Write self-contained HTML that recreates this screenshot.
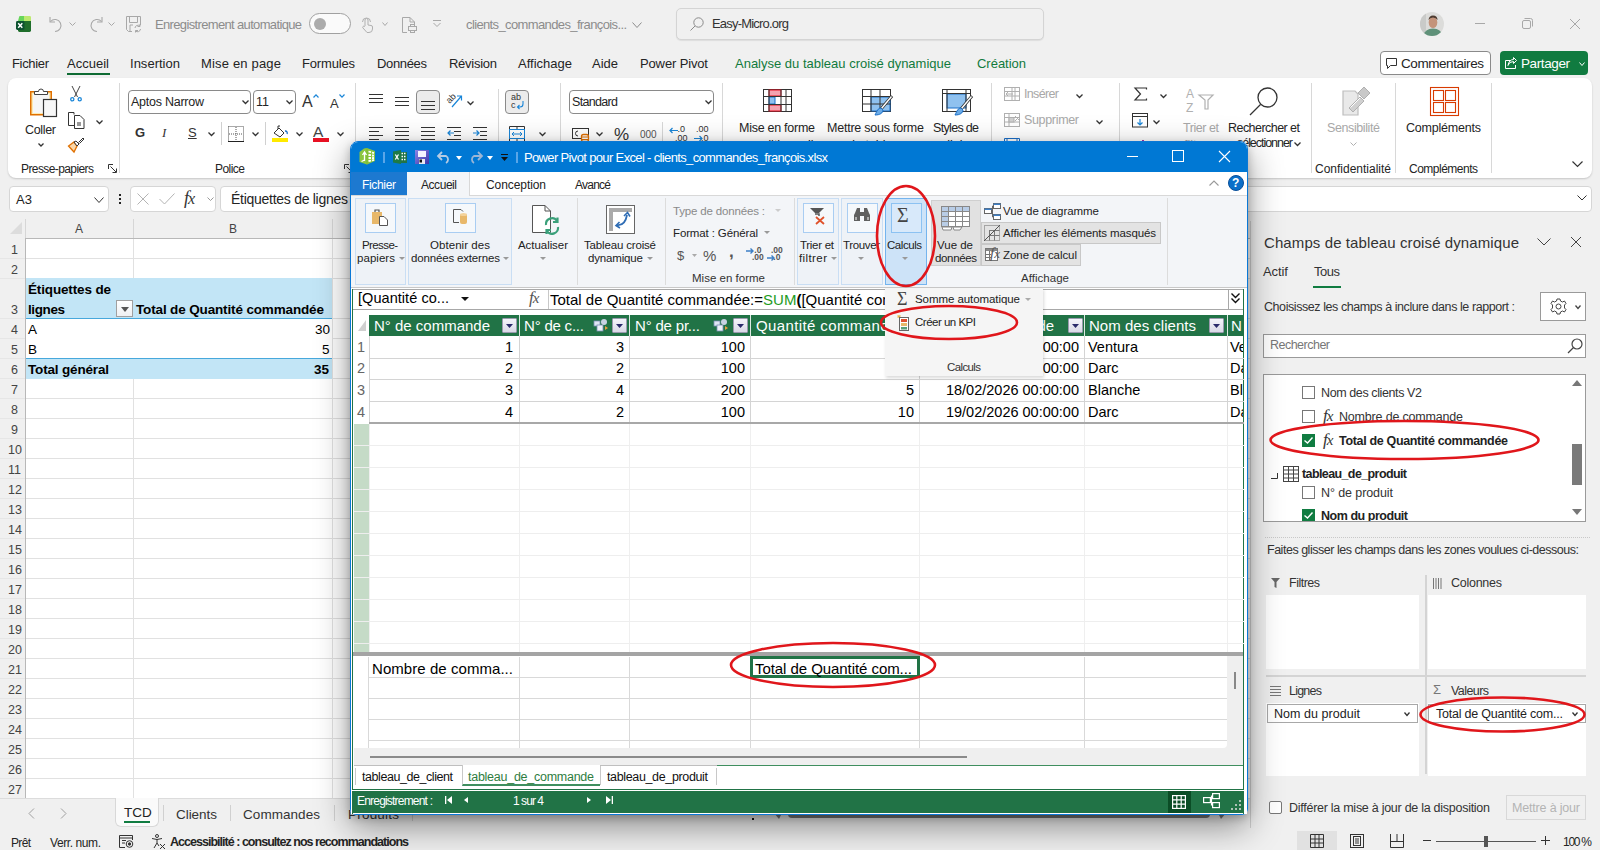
<!DOCTYPE html>
<html><head><meta charset="utf-8">
<style>
*{margin:0;padding:0;box-sizing:border-box}
html,body{width:1600px;height:850px;overflow:hidden;background:#f0f0f0;font-family:"Liberation Sans",sans-serif;color:#242424}
.a{position:absolute}
.t{position:absolute;white-space:nowrap;line-height:1}
svg{position:absolute;overflow:visible}
</style></head><body>

<!-- ===== EXCEL TITLE BAR ===== -->
<div id="titlebar">
<svg style="left:16px;top:16px" width="16" height="16" viewBox="0 0 16 16"><path d="M3 1.2 Q3 0 4.2 0 H8 V5 H2 Z" fill="#67d55b"/><path d="M8 0 H13.8 Q15 0 15 1.2 V5 H8 Z" fill="#bde96f"/><path d="M2 5 H15 V14.6 Q15 16 13.6 16 H3.4 Q2 16 2 14.6 Z" fill="#1f6e2b"/><rect x="0" y="5" width="8.5" height="9" rx="1.4" fill="#0c5230"/><path d="M2.2 7.3 L6.3 11.8 M6.3 7.3 L2.2 11.8" stroke="#fff" stroke-width="1.5"/></svg>
<svg style="left:49px;top:16px" width="16" height="16" viewBox="0 0 16 16" fill="none" stroke="#a8a8a8" stroke-width="1.1">
 <path d="M1 1 V6 H6"/><path d="M1.5 5.5 A6 6 0 1 1 6 15.5"/>
</svg>
<svg style="left:69px;top:22px" width="7" height="4" viewBox="0 0 7 4" fill="none" stroke="#a8a8a8"><path d="M0.5 0.5 L3.5 3.5 L6.5 0.5"/></svg>
<svg style="left:88px;top:16px" width="16" height="16" viewBox="0 0 16 16" fill="none" stroke="#a8a8a8" stroke-width="1.1">
 <path d="M14 1 V6 H9"/><path d="M13.5 5.5 A6 6 0 1 0 9 15.5"/>
</svg>
<svg style="left:108px;top:22px" width="7" height="4" viewBox="0 0 7 4" fill="none" stroke="#a8a8a8"><path d="M0.5 0.5 L3.5 3.5 L6.5 0.5"/></svg>
<svg style="left:126px;top:16px" width="16" height="16" viewBox="0 0 16 16" fill="none" stroke="#a8a8a8" stroke-width="1">
 <path d="M0.5 0.5 H14.5 V9 M0.5 0.5 V13.5 L2.5 15.5 H6"/><path d="M3.5 0.5 V6.5 H11.5 V0.5"/><path d="M7 9 H4 V15"/>
 <path d="M9 12 A3 3 0 0 1 14 10 M14 8 V10.5 H11.5 M14.5 13 A3 3 0 0 1 9.5 15 M9.5 16.5 V14.5 H12"/>
</svg>
<div class="t" style="left:155px;top:18px;font-size:13px;color:#8c8c8c;letter-spacing:-0.652px">Enregistrement automatique</div>
<div class="a" style="left:309px;top:13px;width:42px;height:21px;border:1px solid #a0a0a0;border-radius:11px;background:#fafafa"></div>
<div class="a" style="left:314px;top:18px;width:12px;height:12px;border-radius:6px;background:#ababab"></div>
<svg style="left:361px;top:17px" width="12" height="16" viewBox="0 0 12 16" fill="none" stroke="#b0b0b0"><path d="M4 9 V3 A1.5 1.5 0 0 1 7 3 V8 L10 8.5 A1.5 1.5 0 0 1 11.5 10 V12 A3.5 3.5 0 0 1 8 15.5 H6 L2 11 A1 1 0 0 1 3.5 9.5 Z"/><path d="M1.5 5 A4 4 0 0 1 9.5 5"/></svg><svg style="left:382px;top:22px" width="6" height="4" viewBox="0 0 6 4" fill="none" stroke="#a8a8a8"><path d="M0.5 0.5 L3.0 3.5 L5.5 0.5"/></svg><svg style="left:402px;top:17px" width="15" height="16" viewBox="0 0 15 16" fill="none" stroke="#a8a8a8"><path d="M8 0.5 H0.5 V15.5 H5 M8 0.5 L12.5 5 V8 M8 0.5 V5 H12.5"/><rect x="6.5" y="9.5" width="8" height="4"/><rect x="8.5" y="7.5" width="4" height="2"/><rect x="8.5" y="13.5" width="4" height="2"/></svg><svg style="left:433px;top:20px" width="8" height="7" viewBox="0 0 8 7" fill="none" stroke="#a8a8a8"><path d="M0 0.5 H8 M0.5 3 L4 6.5 L7.5 3"/></svg><div class="t" style="left:466px;top:18px;font-size:13px;color:#8c8c8c;letter-spacing:-0.624px">clients_commandes_françois...</div><svg style="left:632px;top:22px" width="10" height="6" viewBox="0 0 10 6" fill="none" stroke="#8c8c8c"><path d="M0.5 0.5 L5.0 5.5 L9.5 0.5"/></svg><div class="a" style="left:676px;top:8px;width:368px;height:32px;background:#f0f0f0;border:1px solid #d4d4d4;border-radius:5px;box-shadow:0 1px 1px rgba(0,0,0,0.08)"></div><svg style="left:690px;top:17px" width="14" height="14" viewBox="0 0 14 14" fill="none" stroke="#8a8a8a"><circle cx="8.5" cy="5.5" r="4.7"/><path d="M5 9 L0.5 13.5"/></svg><div class="t" style="left:712px;top:17px;font-size:13px;color:#333;letter-spacing:-0.802px">Easy-Micro.org</div><svg style="left:1420px;top:12px" width="24" height="24" viewBox="0 0 24 24"><defs><clipPath id="av"><circle cx="12" cy="12" r="12"/></clipPath></defs><g clip-path="url(#av)"><rect width="24" height="24" fill="#dcdcda"/><rect x="0" y="0" width="6" height="24" fill="#c9cac8"/><ellipse cx="13" cy="10.5" rx="4.3" ry="5.5" fill="#c4937a"/><path d="M8.5 8 Q9 3.5 13 3.5 Q17.5 3.5 17.5 8 Q16 5.5 13 5.5 Q10 5.5 8.5 8 Z" fill="#4e3b30"/><path d="M3 24 Q5 16.5 13 16.5 Q21 16.5 23 24 Z" fill="#5f9179"/></g></svg><div class="a" style="left:1475px;top:23px;width:10px;height:1px;background:#a8a8a8"></div><svg style="left:1522px;top:18px" width="11" height="11" viewBox="0 0 11 11" fill="none" stroke="#a8a8a8"><rect x="0.5" y="2.5" width="8" height="8" rx="1.5"/><path d="M2.5 0.5 H8.5 A2 2 0 0 1 10.5 2.5 V8.5"/></svg><svg style="left:1570px;top:19px" width="10" height="10" viewBox="0 0 10 10" fill="none" stroke="#a8a8a8"><path d="M0 0 L10 10 M10 0 L0 10"/></svg>
</div>

<!-- ===== TABS ===== -->
<div id="tabs" style="font-size:13px">
<div class="t" style="left:12px;top:57px;letter-spacing:-0.336px">Fichier</div>
<div class="t" style="left:67px;top:57px;letter-spacing:0.013px">Accueil</div>
<div class="a" style="left:67px;top:73px;width:43px;height:2px;background:#0e6b33"></div>
<div class="t" style="left:130px;top:57px;letter-spacing:0.016px">Insertion</div>
<div class="t" style="left:201px;top:57px;letter-spacing:0.176px">Mise en page</div>
<div class="t" style="left:302px;top:57px;letter-spacing:-0.170px">Formules</div>
<div class="t" style="left:377px;top:57px;letter-spacing:-0.341px">Données</div>
<div class="t" style="left:449px;top:57px;letter-spacing:-0.266px">Révision</div>
<div class="t" style="left:518px;top:57px;letter-spacing:0.004px">Affichage</div>
<div class="t" style="left:592px;top:57px;letter-spacing:-0.010px">Aide</div>
<div class="t" style="left:640px;top:57px;letter-spacing:-0.138px">Power Pivot</div>
<div class="t" style="left:735px;top:57px;color:#117a3c;letter-spacing:-0.003px">Analyse du tableau croisé dynamique</div>
<div class="t" style="left:977px;top:57px;color:#117a3c;letter-spacing:-0.020px">Création</div>
<div class="a" style="left:1380px;top:51px;width:111px;height:24px;background:#fff;border:1px solid #8a8a8a;border-radius:4px"></div><svg style="left:1386px;top:58px" width="11" height="11" viewBox="0 0 11 11" fill="none" stroke="#333"><path d="M0.5 0.5 H10.5 V7.5 H4.5 L1.5 10.5 V7.5 H0.5 Z"/></svg><div class="t" style="left:1401px;top:57px;font-size:13.5px;letter-spacing:-0.435px">Commentaires</div><div class="a" style="left:1500px;top:51px;width:88px;height:24px;background:#107b40;border-radius:4px"></div><svg style="left:1505px;top:57px" width="12" height="12" viewBox="0 0 12 12" fill="none" stroke="#fff"><path d="M5 3.5 H0.5 V11.5 H10.5 V8"/><path d="M3 8.5 Q4 4.5 8.5 4.5 V6.5 L11.5 3.5 L8.5 0.5 V2.5 Q4 2.5 3 8.5"/></svg><div class="t" style="left:1521px;top:57px;font-size:13.5px;color:#fff;letter-spacing:-0.397px">Partager</div><svg style="left:1579px;top:62px" width="6" height="4" viewBox="0 0 6 4" fill="none" stroke="#fff"><path d="M0.5 0.5 L3.0 3.5 L5.5 0.5"/></svg>
</div>

<!-- ===== RIBBON ===== -->
<div class="a" style="left:8px;top:78px;width:1584px;height:100px;background:#fff;border-radius:8px;box-shadow:0 1px 2px rgba(0,0,0,0.18)"></div>
<div id="xlrib" style="font-size:12px">
<!-- Presse-papiers -->
<svg style="left:30px;top:87px" width="28" height="31" viewBox="0 0 28 31" fill="none">
 <rect x="0.75" y="4.75" width="20.5" height="23" fill="#fde9b0" stroke="#e07000" stroke-width="1.5"/>
 <rect x="3" y="7" width="16" height="19" fill="#f6f6f6"/>
 <path d="M4.5 7.5 V4.5 H8.5 A2.5 2.5 0 0 1 13.5 4.5 H17.5 V7.5 Z" fill="#fff" stroke="#444" stroke-width="1"/>
 <rect x="13.5" y="12.5" width="13" height="17" fill="#f7f7f7" stroke="#333" stroke-width="1.2"/>
</svg>
<div class="t" style="left:25px;top:124px;font-size:12.5px;letter-spacing:-0.331px">Coller</div>
<svg style="left:38px;top:143px" width="6" height="4" viewBox="0 0 6 4" fill="none" stroke="#333" stroke-width="1.3"><path d="M0.5 0.5 L3 3 L5.5 0.5"/></svg>
<svg style="left:70px;top:86px" width="12" height="16" viewBox="0 0 12 16" fill="none" stroke="#444">
 <path d="M2 0 L7.5 11 M10 0 L4.5 11"/><circle cx="2.3" cy="13.3" r="1.6" stroke="#1a86d8" stroke-width="1.3"/><circle cx="9.7" cy="13.3" r="1.6" stroke="#1a86d8" stroke-width="1.3"/>
</svg>
<svg style="left:68px;top:112px" width="17" height="17" viewBox="0 0 17 17" fill="none" stroke="#333">
 <path d="M6 2.5 V0.5 H0.5 V13.5 H6"/><path d="M6.5 3.5 H12 L16 7.5 V16.5 H6.5 Z"/><path d="M9 11 H13 M9 13 H13"/>
</svg>
<svg style="left:96px;top:120px" width="7" height="4" viewBox="0 0 7 4" fill="none" stroke="#333" stroke-width="1.3"><path d="M0.5 0.5 L3.5 3.5 L6.5 0.5"/></svg>
<svg style="left:68px;top:137px" width="17" height="17" viewBox="0 0 17 17" fill="none">
 <path d="M0.5 9 L6 15 L9 9 L6 5 Z" fill="#fbd7a8" stroke="#e07000" stroke-width="1.3"/>
 <path d="M6 5 L9 9 L11 7 L8 4 Z" fill="#fff" stroke="#333"/>
 <path d="M10.5 5.5 L15 1 L16 2 L11.5 6.5" stroke="#333"/>
</svg>
<div class="t" style="left:21px;top:163px;font-size:12px;letter-spacing:-0.593px">Presse-papiers</div>
<svg style="left:108px;top:164px" width="9" height="9" viewBox="0 0 9 9" fill="none" stroke="#333"><path d="M0.5 5 V0.5 H5"/><path d="M2.5 2.5 L8 8 M4.5 8.5 H8.5 V4.5"/></svg>
<div class="a" style="left:119px;top:83px;width:1px;height:90px;background:#d8d8d8"></div>

<!-- Police -->
<div class="a" style="left:128px;top:90px;width:123px;height:24px;background:#fff;border:1px solid #8a8a8a;border-radius:4px"></div>
<div class="t" style="left:131px;top:96px;font-size:12.5px;letter-spacing:-0.249px">Aptos Narrow</div>
<svg style="left:242px;top:100px" width="7" height="4" viewBox="0 0 7 4" fill="none" stroke="#333" stroke-width="1.3"><path d="M0.5 0.5 L3.5 3.5 L6.5 0.5"/></svg>
<div class="a" style="left:253px;top:90px;width:43px;height:24px;background:#fff;border:1px solid #8a8a8a;border-radius:4px"></div>
<div class="t" style="left:256px;top:96px;font-size:12.5px">11</div>
<svg style="left:286px;top:100px" width="7" height="4" viewBox="0 0 7 4" fill="none" stroke="#333" stroke-width="1.3"><path d="M0.5 0.5 L3.5 3.5 L6.5 0.5"/></svg>
<div class="t" style="left:302px;top:94px;font-size:16px;color:#333">A</div>
<svg style="left:313px;top:94px" width="6" height="4" viewBox="0 0 6 4" fill="none" stroke="#1a86d8" stroke-width="1.2"><path d="M0.5 3.5 L3 0.8 L5.5 3.5"/></svg>
<div class="t" style="left:330px;top:97px;font-size:13px;color:#333">A</div>
<svg style="left:339px;top:94px" width="6" height="4" viewBox="0 0 6 4" fill="none" stroke="#1a86d8" stroke-width="1.2"><path d="M0.5 0.5 L3 3.2 L5.5 0.5"/></svg>
<div class="t" style="left:135px;top:126px;font-size:13px;font-weight:bold;color:#333">G</div>
<div class="t" style="left:162px;top:126px;font-size:13px;font-style:italic;font-family:'Liberation Serif';color:#333">I</div>
<div class="t" style="left:188px;top:126px;font-size:13px;color:#333;text-decoration:underline">S</div>
<svg style="left:208px;top:132px" width="7" height="4" viewBox="0 0 7 4" fill="none" stroke="#333" stroke-width="1.3"><path d="M0.5 0.5 L3.5 3.5 L6.5 0.5"/></svg>
<div class="a" style="left:221px;top:122px;width:1px;height:23px;background:#d0d0d0"></div>
<svg style="left:228px;top:126px" width="16" height="16" viewBox="0 0 16 16" fill="none" stroke="#555" stroke-dasharray="1 1"><path d="M0.5 0.5 H15.5 V15 M0.5 0.5 V15 M8 1 V15 M1 8 H15"/><path d="M0 15.5 H16" stroke="#222" stroke-dasharray="none"/></svg>
<svg style="left:252px;top:132px" width="7" height="4" viewBox="0 0 7 4" fill="none" stroke="#333" stroke-width="1.3"><path d="M0.5 0.5 L3.5 3.5 L6.5 0.5"/></svg>
<div class="a" style="left:265px;top:122px;width:1px;height:23px;background:#d0d0d0"></div>
<svg style="left:272px;top:125px" width="17" height="18" viewBox="0 0 17 18" fill="none">
 <path d="M2 8 L7 3 L12 8 L8 12 Z" stroke="#333"/><path d="M6 4 V1 H8" stroke="#333"/><path d="M13 6 A2 2 0 0 1 15 9" stroke="#1a6fc8" stroke-width="1.3"/>
 <rect x="0" y="13" width="16" height="4" fill="#ffea00"/>
</svg>
<svg style="left:296px;top:132px" width="7" height="4" viewBox="0 0 7 4" fill="none" stroke="#333" stroke-width="1.3"><path d="M0.5 0.5 L3.5 3.5 L6.5 0.5"/></svg>
<div class="t" style="left:313px;top:124px;font-size:15.5px;color:#444">A</div>
<div class="a" style="left:313px;top:138px;width:16px;height:4px;background:#e81123"></div>
<svg style="left:337px;top:132px" width="7" height="4" viewBox="0 0 7 4" fill="none" stroke="#333" stroke-width="1.3"><path d="M0.5 0.5 L3.5 3.5 L6.5 0.5"/></svg>
<div class="t" style="left:215px;top:163px;font-size:12px;letter-spacing:-0.537px">Police</div>
<svg style="left:344px;top:164px" width="9" height="9" viewBox="0 0 9 9" fill="none" stroke="#333"><path d="M0.5 5 V0.5 H5"/><path d="M2.5 2.5 L8 8 M4.5 8.5 H8.5 V4.5"/></svg>
<div class="a" style="left:355px;top:83px;width:1px;height:90px;background:#d8d8d8"></div>
</div>

<div id="xlrib2" style="font-size:12px">
<div class="a" style="left:369px;top:94px;width:14px;height:1px;background:#333"></div><div class="a" style="left:369px;top:98px;width:14px;height:1px;background:#333"></div><div class="a" style="left:369px;top:102px;width:14px;height:1px;background:#333"></div><div class="a" style="left:395px;top:97px;width:14px;height:1px;background:#333"></div><div class="a" style="left:395px;top:101px;width:14px;height:1px;background:#333"></div><div class="a" style="left:395px;top:105px;width:14px;height:1px;background:#333"></div><div class="a" style="left:416px;top:90px;width:24px;height:24px;background:#ececec;border:1px solid #8a8a8a;border-radius:4px"></div><div class="a" style="left:421px;top:101px;width:14px;height:1px;background:#333"></div><div class="a" style="left:421px;top:105px;width:14px;height:1px;background:#333"></div><div class="a" style="left:421px;top:109px;width:14px;height:1px;background:#333"></div><div class="t" style="left:447px;top:93px;font-size:9px;color:#333;transform:rotate(-45deg);transform-origin:6px 6px">ab</div><svg style="left:451px;top:94px" width="12" height="14" viewBox="0 0 12 14" fill="none" stroke="#1a86d8" stroke-width="1.2"><path d="M1 13 L10.5 2 M6 2 H10.5 V6.5"/></svg><svg style="left:467px;top:101px" width="7" height="4" viewBox="0 0 7 4" fill="none" stroke="#333" stroke-width="1.3"><path d="M0.5 0.5 L3.5 3.5 L6.5 0.5"/></svg><div class="a" style="left:369px;top:127px;width:14px;height:1px;background:#333"></div><div class="a" style="left:369px;top:131px;width:14px;height:1px;background:#333"></div><div class="a" style="left:369px;top:135px;width:14px;height:1px;background:#333"></div><div class="a" style="left:369px;top:139px;width:14px;height:1px;background:#333"></div><div class="a" style="left:379px;top:131px;width:4px;height:1px;background:#fff"></div><div class="a" style="left:379px;top:139px;width:4px;height:1px;background:#fff"></div><div class="a" style="left:395px;top:131px;width:2px;height:1px;background:#fff"></div><div class="a" style="left:407px;top:131px;width:2px;height:1px;background:#fff"></div><div class="a" style="left:395px;top:139px;width:2px;height:1px;background:#fff"></div><div class="a" style="left:407px;top:139px;width:2px;height:1px;background:#fff"></div><div class="a" style="left:421px;top:131px;width:4px;height:1px;background:#fff"></div><div class="a" style="left:421px;top:139px;width:4px;height:1px;background:#fff"></div><div class="a" style="left:395px;top:127px;width:14px;height:1px;background:#333"></div><div class="a" style="left:395px;top:131px;width:14px;height:1px;background:#333"></div><div class="a" style="left:395px;top:135px;width:14px;height:1px;background:#333"></div><div class="a" style="left:395px;top:139px;width:14px;height:1px;background:#333"></div><div class="a" style="left:421px;top:127px;width:14px;height:1px;background:#333"></div><div class="a" style="left:421px;top:131px;width:14px;height:1px;background:#333"></div><div class="a" style="left:421px;top:135px;width:14px;height:1px;background:#333"></div><div class="a" style="left:421px;top:139px;width:14px;height:1px;background:#333"></div><div class="a" style="left:447px;top:127px;width:14px;height:1px;background:#333"></div><div class="a" style="left:447px;top:139px;width:14px;height:1px;background:#333"></div><div class="a" style="left:454px;top:131px;width:7px;height:1px;background:#333"></div><div class="a" style="left:454px;top:135px;width:7px;height:1px;background:#333"></div><svg style="left:447px;top:129px" width="7" height="8" viewBox="0 0 7 8" fill="none" stroke="#1a86d8" stroke-width="1.2"><path d="M7 4 H1 M3.5 1.5 L1 4 L3.5 6.5"/></svg><div class="a" style="left:473px;top:127px;width:14px;height:1px;background:#333"></div><div class="a" style="left:473px;top:139px;width:14px;height:1px;background:#333"></div><div class="a" style="left:480px;top:131px;width:7px;height:1px;background:#333"></div><div class="a" style="left:480px;top:135px;width:7px;height:1px;background:#333"></div><svg style="left:473px;top:129px" width="7" height="8" viewBox="0 0 7 8" fill="none" stroke="#1a86d8" stroke-width="1.2"><path d="M0 4 H6 M3.5 1.5 L6 4 L3.5 6.5"/></svg><div class="a" style="left:498px;top:89px;width:1px;height:56px;background:#d8d8d8"></div><div class="a" style="left:505px;top:90px;width:24px;height:24px;background:#ececec;border:1px solid #8a8a8a;border-radius:4px"></div><div class="t" style="left:511px;top:93px;font-size:9px;color:#333;line-height:8px">ab<br>c</div><svg style="left:517px;top:101px" width="8" height="8" viewBox="0 0 8 8" fill="none" stroke="#1a86d8" stroke-width="1.1"><path d="M6 0 V3 A3 3 0 0 1 3 6 H0.5 M2.5 4 L0.5 6 L2.5 8"/></svg><svg style="left:509px;top:126px" width="16" height="16" viewBox="0 0 16 16" fill="none" stroke="#333"><path d="M0.5 0.5 H15.5 V3.5 H0.5 Z M0.5 12.5 H15.5 V15.5 H0.5 Z M8 0 V3.5 M8 12.5 V16"/><rect x="0.5" y="3.5" width="15" height="9" stroke="#1a86d8"/><path d="M3 8 H13 M5 6 L3 8 L5 10 M11 6 L13 8 L11 10" stroke="#1a86d8"/></svg><svg style="left:539px;top:132px" width="7" height="4" viewBox="0 0 7 4" fill="none" stroke="#333" stroke-width="1.3"><path d="M0.5 0.5 L3.5 3.5 L6.5 0.5"/></svg><div class="a" style="left:560px;top:83px;width:1px;height:62px;background:#d8d8d8"></div><div class="a" style="left:569px;top:90px;width:145px;height:24px;background:#fff;border:1px solid #8a8a8a;border-radius:4px"></div><div class="t" style="left:572px;top:96px;font-size:12.5px;letter-spacing:-0.676px">Standard</div><svg style="left:705px;top:100px" width="7" height="4" viewBox="0 0 7 4" fill="none" stroke="#333" stroke-width="1.3"><path d="M0.5 0.5 L3.5 3.5 L6.5 0.5"/></svg><svg style="left:572px;top:128px" width="18" height="14" viewBox="0 0 18 14" fill="none" stroke="#333"><rect x="0.5" y="0.5" width="16" height="10"/><path d="M6 3 A2.5 2.5 0 1 0 6 8"/><rect x="9.5" y="6.5" width="7" height="7" rx="2" fill="#fff" stroke="#e07000" stroke-width="1.3"/><path d="M9.5 9 H16.5 M9.5 11.5 H16.5" stroke="#e07000"/></svg><svg style="left:596px;top:132px" width="7" height="4" viewBox="0 0 7 4" fill="none" stroke="#333" stroke-width="1.3"><path d="M0.5 0.5 L3.5 3.5 L6.5 0.5"/></svg><div class="t" style="left:614px;top:126px;font-size:17px;color:#333">%</div><div class="t" style="left:640px;top:130px;font-size:10px;color:#555">000</div><div class="a" style="left:662px;top:122px;width:1px;height:23px;background:#d8d8d8"></div><div class="t" style="left:675px;top:125px;font-size:9px;color:#333;line-height:9px">&nbsp;.0<br>.00</div><svg style="left:669px;top:127px" width="9" height="7" viewBox="0 0 9 7" fill="none" stroke="#1a86d8" stroke-width="1.2"><path d="M9 3.5 H1 M3.5 1 L1 3.5 L3.5 6"/></svg><div class="t" style="left:696px;top:125px;font-size:9px;color:#333;line-height:9px">.00<br>&nbsp;&nbsp;.0</div><svg style="left:694px;top:135px" width="9" height="7" viewBox="0 0 9 7" fill="none" stroke="#1a86d8" stroke-width="1.2"><path d="M0 3.5 H8 M5.5 1 L8 3.5 L5.5 6"/></svg><div class="a" style="left:722px;top:83px;width:1px;height:62px;background:#d8d8d8"></div><svg style="left:763px;top:89px" width="29" height="23" viewBox="0 0 29 23" fill="none" stroke="#333"><rect x="0.5" y="0.5" width="28" height="22" fill="#fff"/><rect x="6" y="1" width="12" height="6" fill="#f4a3b0" stroke="#e81123"/><rect x="6" y="16" width="12" height="6" fill="#f4a3b0" stroke="#e81123"/><rect x="6" y="8" width="6" height="7" fill="#8fc1ef" stroke="#1a6fc8"/><path d="M6 0.5 V22.5 M18 0.5 V22.5 M23 0.5 V22.5 M0.5 7.5 H28.5 M0.5 15.5 H28.5" stroke="#333"/></svg><div class="t" style="left:739px;top:122px;font-size:12.5px;letter-spacing:-0.267px">Mise en forme</div><svg style="left:862px;top:89px" width="31" height="27" viewBox="0 0 31 27" fill="none" stroke="#333"><rect x="0.5" y="0.5" width="28" height="22" fill="#fff"/><rect x="9" y="8" width="19" height="14" fill="#8fc1ef" stroke="#1a6fc8"/><path d="M9 0.5 V22.5 M18 0.5 V22.5 M0.5 7.5 H28.5 M0.5 15 H28.5"/><path d="M30 7 L19 20" stroke="#333" stroke-width="3"/><path d="M29.5 7.5 L19.5 19.5" stroke="#fff" stroke-width="1.4"/><path d="M19 19 C16 19 15 22 13 26 C18 26 21 24 21 21 Z" fill="#6aaae6" stroke="#1a6fc8"/></svg><div class="t" style="left:827px;top:122px;font-size:12.5px;letter-spacing:-0.233px">Mettre sous forme</div><svg style="left:942px;top:89px" width="31" height="27" viewBox="0 0 31 27" fill="none" stroke="#333"><rect x="0.5" y="0.5" width="28" height="22" fill="#fff"/><rect x="5" y="5" width="19" height="14" fill="#8fc1ef" stroke="#1a6fc8"/><path d="M0.5 4.5 H28.5 M5 0.5 V22.5 M24 0.5 V22.5"/><path d="M30 7 L19 20" stroke="#333" stroke-width="3"/><path d="M29.5 7.5 L19.5 19.5" stroke="#fff" stroke-width="1.4"/><path d="M19 19 C16 19 15 22 13 26 C18 26 21 24 21 21 Z" fill="#6aaae6" stroke="#1a6fc8"/></svg><div class="t" style="left:933px;top:122px;font-size:12.5px;letter-spacing:-0.678px">Styles de</div><div class="t" style="left:744px;top:139px;font-size:12.5px">conditionnelle</div><div class="t" style="left:848px;top:139px;font-size:12.5px">de tableau</div><div class="t" style="left:934px;top:139px;font-size:12.5px">cellules</div><div class="t" style="left:1184px;top:139px;font-size:12.5px;color:#a8a8a8">filtrer</div><div class="a" style="left:991px;top:83px;width:1px;height:62px;background:#d8d8d8"></div><svg style="left:1004px;top:87px" width="17" height="15" viewBox="0 0 17 15" fill="none" stroke="#b0b0b0"><rect x="0.5" y="0.5" width="15" height="13"/><path d="M0.5 4.5 H15.5 M0.5 9 H15.5 M8 0.5 V14 M11 0.5 V14"/><path d="M9 7 H2 M4 5 L2 7 L4 9"/></svg><div class="t" style="left:1024px;top:88px;font-size:12.5px;color:#a8a8a8;letter-spacing:-0.651px">Insérer</div><svg style="left:1076px;top:94px" width="7" height="4" viewBox="0 0 7 4" fill="none" stroke="#333" stroke-width="1.3"><path d="M0.5 0.5 L3.5 3.5 L6.5 0.5"/></svg><svg style="left:1004px;top:113px" width="17" height="15" viewBox="0 0 17 15" fill="none" stroke="#b0b0b0"><rect x="0.5" y="0.5" width="15" height="13"/><path d="M0.5 4.5 H15.5 M0.5 9 H15.5 M5 0.5 V14"/><rect x="5" y="4.5" width="5" height="4.5" fill="#d0d0d0"/><path d="M11 3 L16 8 M16 3 L11 8"/></svg><div class="t" style="left:1024px;top:114px;font-size:12.5px;color:#a8a8a8;letter-spacing:-0.334px">Supprimer</div><svg style="left:1096px;top:120px" width="7" height="4" viewBox="0 0 7 4" fill="none" stroke="#333" stroke-width="1.3"><path d="M0.5 0.5 L3.5 3.5 L6.5 0.5"/></svg><svg style="left:1004px;top:138px" width="16" height="6" viewBox="0 0 16 6" fill="none" stroke="#1a6fc8"><path d="M0.5 3 V0.5 H15.5 V3 M3 0 V3 M13 0 V3"/></svg><div class="a" style="left:1119px;top:83px;width:1px;height:62px;background:#d8d8d8"></div><svg style="left:1134px;top:87px" width="13" height="14" viewBox="0 0 13 14" fill="none" stroke="#333" stroke-width="1.2"><path d="M12.5 2.5 V1 H1 L6.5 7 L1 13 H12.5 V11.5"/></svg><svg style="left:1160px;top:94px" width="7" height="4" viewBox="0 0 7 4" fill="none" stroke="#333" stroke-width="1.3"><path d="M0.5 0.5 L3.5 3.5 L6.5 0.5"/></svg><svg style="left:1132px;top:113px" width="16" height="15" viewBox="0 0 16 15" fill="none" stroke="#333"><rect x="0.5" y="0.5" width="15" height="13.5"/><path d="M0.5 3.5 H15.5"/><path d="M8 6 V12 M5.5 9.5 L8 12 L10.5 9.5" stroke="#1a86d8" stroke-width="1.2"/></svg><svg style="left:1153px;top:120px" width="7" height="4" viewBox="0 0 7 4" fill="none" stroke="#333" stroke-width="1.3"><path d="M0.5 0.5 L3.5 3.5 L6.5 0.5"/></svg><svg style="left:1138px;top:139px" width="10" height="6" viewBox="0 0 10 6" fill="none" stroke="#a020a0"><path d="M1 6 L5 1 L9 6"/></svg><div class="t" style="left:1186px;top:87px;font-size:12px;color:#b0b0b0;line-height:14px">A<br>Z</div><svg style="left:1198px;top:94px" width="16" height="16" viewBox="0 0 16 16" fill="none" stroke="#b0b0b0" stroke-width="1.2"><path d="M1 1 H15 L10 6 V15 H7 V6 Z"/></svg><div class="t" style="left:1183px;top:122px;font-size:12.5px;color:#a8a8a8;letter-spacing:-0.446px">Trier et</div><svg style="left:1249px;top:87px" width="30" height="30" viewBox="0 0 30 30" fill="none" stroke="#333" stroke-width="1.3"><circle cx="18.5" cy="10.5" r="9.5"/><path d="M11.5 17.5 L1 28"/></svg><div class="t" style="left:1228px;top:122px;font-size:12.5px;letter-spacing:-0.543px">Rechercher et</div><div class="t" style="left:1237px;top:137px;font-size:12.5px;letter-spacing:-1.037px">sélectionner</div><svg style="left:1294px;top:142px" width="7" height="4" viewBox="0 0 7 4" fill="none" stroke="#333" stroke-width="1.3"><path d="M0.5 0.5 L3.5 3.5 L6.5 0.5"/></svg><div class="a" style="left:1311px;top:83px;width:1px;height:90px;background:#d8d8d8"></div><svg style="left:1342px;top:86px" width="29" height="30" viewBox="0 0 29 30"><path d="M1 5 H13 L16 8 V29 H1 Z" fill="#e9e9e9" stroke="#bdbdbd" stroke-width="1.2"/><path d="M7 22 L18 11 L22 15 L11 26 Z" fill="#d0d0d0" stroke="#b0b0b0"/><path d="M8.5 21.5 L18 12" stroke="#fff" stroke-width="1"/><path d="M16 7 L22 1 L28 7 L22 13 Z" fill="#c8c8c8" stroke="#b0b0b0"/></svg><div class="t" style="left:1327px;top:122px;font-size:12.5px;color:#a8a8a8;letter-spacing:-0.398px">Sensibilité</div><svg style="left:1350px;top:142px" width="7" height="4" viewBox="0 0 7 4" fill="none" stroke="#b0b0b0"><path d="M0.5 0.5 L3.5 3.5 L6.5 0.5"/></svg><div class="t" style="left:1315px;top:163px;font-size:12px;letter-spacing:-0.004px">Confidentialité</div><div class="a" style="left:1395px;top:83px;width:1px;height:90px;background:#d8d8d8"></div><svg style="left:1430px;top:87px" width="29" height="29" viewBox="0 0 29 29" fill="none" stroke="#d83b01" stroke-width="1.1"><rect x="0.5" y="0.5" width="28" height="28"/><rect x="3.5" y="3.5" width="10" height="10"/><rect x="15.5" y="3.5" width="10" height="10"/><rect x="3.5" y="15.5" width="10" height="10"/><rect x="15.5" y="15.5" width="10" height="10"/></svg><div class="t" style="left:1406px;top:122px;font-size:12.5px;letter-spacing:-0.212px">Compléments</div><div class="t" style="left:1409px;top:163px;font-size:12px;letter-spacing:-0.503px">Compléments</div><div class="a" style="left:1491px;top:83px;width:1px;height:90px;background:#d8d8d8"></div><svg style="left:1572px;top:161px" width="11" height="6" viewBox="0 0 11 6" fill="none" stroke="#333" stroke-width="1.2"><path d="M0.5 0.5 L5.5 5.5 L10.5 0.5"/></svg>
</div>
<!-- ===== FORMULA BAR ===== -->
<div class="a" style="left:9px;top:186px;width:100px;height:26px;background:#fff;border:1px solid #d6d6d6;border-radius:4px"></div>
<div class="a" style="left:130px;top:186px;width:86px;height:26px;background:#fff;border:1px solid #d6d6d6;border-radius:4px"></div>
<div class="a" style="left:220px;top:186px;width:1372px;height:26px;background:#fff;border:1px solid #d6d6d6;border-radius:4px"></div>

<div class="t" style="left:16px;top:193px;font-size:13px">A3</div><svg style="left:94px;top:197px" width="10" height="6" viewBox="0 0 10 6" fill="none" stroke="#333"><path d="M0.5 0.5 L5.0 5.5 L9.5 0.5"/></svg><div class="a" style="left:119px;top:194px;width:2px;height:2px;background:#222"></div><div class="a" style="left:119px;top:198px;width:2px;height:2px;background:#222"></div><div class="a" style="left:119px;top:202px;width:2px;height:2px;background:#222"></div><svg style="left:137px;top:193px" width="12" height="12" viewBox="0 0 12 12" fill="none" stroke="#b4b4b4"><path d="M0.5 0.5 L11.5 11.5 M11.5 0.5 L0.5 11.5"/></svg><svg style="left:159px;top:193px" width="16" height="12" viewBox="0 0 16 12" fill="none" stroke="#b4b4b4"><path d="M0.5 6 L5.5 11 L15.5 0.5"/></svg><div class="t" style="left:184px;top:189px;font-size:18px;font-style:italic;font-family:'Liberation Serif';color:#333;letter-spacing:-1px">f<span style="font-size:16px">x</span></div><svg style="left:207px;top:197px" width="7" height="4" viewBox="0 0 7 4" fill="none" stroke="#999"><path d="M0.5 0.5 L3.5 3.5 L6.5 0.5"/></svg><div class="t" style="left:231px;top:192px;font-size:14px;letter-spacing:-0.274px">Étiquettes de lignes</div><svg style="left:1577px;top:195px" width="10" height="6" viewBox="0 0 10 6" fill="none" stroke="#333"><path d="M0.5 0.5 L5 5 L9.5 0.5"/></svg>
<!-- ===== GRID ===== -->
<div class="a" style="left:25px;top:238px;width:1225px;height:561px;background:#fff"></div>
<div class="a" style="left:0;top:213px;width:1250px;height:25px;background:#f0f0f0"></div><svg style="left:10px;top:222px" width="12" height="12" viewBox="0 0 12 12"><path d="M12 0 V12 H0 Z" fill="#dcdcdc"/></svg><div class="a" style="left:25px;top:219px;width:1px;height:19px;background:#d6d6d6"></div><div class="a" style="left:133px;top:219px;width:1px;height:19px;background:#d6d6d6"></div><div class="a" style="left:332px;top:219px;width:1px;height:19px;background:#d6d6d6"></div><div class="t" style="left:75px;top:223px;font-size:12px;color:#444">A</div><div class="t" style="left:229px;top:223px;font-size:12px;color:#444">B</div><div class="a" style="left:25px;top:238px;width:1225px;height:1px;background:#b8b8b8"></div><div class="a" style="left:0;top:238px;width:25px;height:561px;background:#f0f0f0"></div><div class="a" style="left:25px;top:238px;width:1px;height:561px;background:#b8b8b8"></div><div class="a" style="left:26px;top:258px;width:1224px;height:1px;background:#e1e1e1"></div><div class="a" style="left:26px;top:278px;width:1224px;height:1px;background:#e1e1e1"></div><div class="a" style="left:26px;top:318px;width:1224px;height:1px;background:#e1e1e1"></div><div class="a" style="left:26px;top:338px;width:1224px;height:1px;background:#e1e1e1"></div><div class="a" style="left:26px;top:358px;width:1224px;height:1px;background:#e1e1e1"></div><div class="a" style="left:26px;top:378px;width:1224px;height:1px;background:#e1e1e1"></div><div class="a" style="left:26px;top:398px;width:1224px;height:1px;background:#e1e1e1"></div><div class="a" style="left:26px;top:418px;width:1224px;height:1px;background:#e1e1e1"></div><div class="a" style="left:26px;top:438px;width:1224px;height:1px;background:#e1e1e1"></div><div class="a" style="left:26px;top:458px;width:1224px;height:1px;background:#e1e1e1"></div><div class="a" style="left:26px;top:478px;width:1224px;height:1px;background:#e1e1e1"></div><div class="a" style="left:26px;top:498px;width:1224px;height:1px;background:#e1e1e1"></div><div class="a" style="left:26px;top:518px;width:1224px;height:1px;background:#e1e1e1"></div><div class="a" style="left:26px;top:538px;width:1224px;height:1px;background:#e1e1e1"></div><div class="a" style="left:26px;top:558px;width:1224px;height:1px;background:#e1e1e1"></div><div class="a" style="left:26px;top:578px;width:1224px;height:1px;background:#e1e1e1"></div><div class="a" style="left:26px;top:598px;width:1224px;height:1px;background:#e1e1e1"></div><div class="a" style="left:26px;top:618px;width:1224px;height:1px;background:#e1e1e1"></div><div class="a" style="left:26px;top:638px;width:1224px;height:1px;background:#e1e1e1"></div><div class="a" style="left:26px;top:658px;width:1224px;height:1px;background:#e1e1e1"></div><div class="a" style="left:26px;top:678px;width:1224px;height:1px;background:#e1e1e1"></div><div class="a" style="left:26px;top:698px;width:1224px;height:1px;background:#e1e1e1"></div><div class="a" style="left:26px;top:718px;width:1224px;height:1px;background:#e1e1e1"></div><div class="a" style="left:26px;top:738px;width:1224px;height:1px;background:#e1e1e1"></div><div class="a" style="left:26px;top:758px;width:1224px;height:1px;background:#e1e1e1"></div><div class="a" style="left:26px;top:778px;width:1224px;height:1px;background:#e1e1e1"></div><div class="a" style="left:26px;top:798px;width:1224px;height:1px;background:#e1e1e1"></div><div class="a" style="left:133px;top:239px;width:1px;height:560px;background:#e1e1e1"></div><div class="a" style="left:332px;top:239px;width:1px;height:560px;background:#e1e1e1"></div><div class="a" style="left:0;top:258px;width:25px;height:1px;background:#e6e6e6"></div><div class="a" style="left:0;top:278px;width:25px;height:1px;background:#e6e6e6"></div><div class="a" style="left:0;top:318px;width:25px;height:1px;background:#e6e6e6"></div><div class="a" style="left:0;top:338px;width:25px;height:1px;background:#e6e6e6"></div><div class="a" style="left:0;top:358px;width:25px;height:1px;background:#e6e6e6"></div><div class="a" style="left:0;top:378px;width:25px;height:1px;background:#e6e6e6"></div><div class="a" style="left:0;top:398px;width:25px;height:1px;background:#e6e6e6"></div><div class="a" style="left:0;top:418px;width:25px;height:1px;background:#e6e6e6"></div><div class="a" style="left:0;top:438px;width:25px;height:1px;background:#e6e6e6"></div><div class="a" style="left:0;top:458px;width:25px;height:1px;background:#e6e6e6"></div><div class="a" style="left:0;top:478px;width:25px;height:1px;background:#e6e6e6"></div><div class="a" style="left:0;top:498px;width:25px;height:1px;background:#e6e6e6"></div><div class="a" style="left:0;top:518px;width:25px;height:1px;background:#e6e6e6"></div><div class="a" style="left:0;top:538px;width:25px;height:1px;background:#e6e6e6"></div><div class="a" style="left:0;top:558px;width:25px;height:1px;background:#e6e6e6"></div><div class="a" style="left:0;top:578px;width:25px;height:1px;background:#e6e6e6"></div><div class="a" style="left:0;top:598px;width:25px;height:1px;background:#e6e6e6"></div><div class="a" style="left:0;top:618px;width:25px;height:1px;background:#e6e6e6"></div><div class="a" style="left:0;top:638px;width:25px;height:1px;background:#e6e6e6"></div><div class="a" style="left:0;top:658px;width:25px;height:1px;background:#e6e6e6"></div><div class="a" style="left:0;top:678px;width:25px;height:1px;background:#e6e6e6"></div><div class="a" style="left:0;top:698px;width:25px;height:1px;background:#e6e6e6"></div><div class="a" style="left:0;top:718px;width:25px;height:1px;background:#e6e6e6"></div><div class="a" style="left:0;top:738px;width:25px;height:1px;background:#e6e6e6"></div><div class="a" style="left:0;top:758px;width:25px;height:1px;background:#e6e6e6"></div><div class="a" style="left:0;top:778px;width:25px;height:1px;background:#e6e6e6"></div><div class="a" style="left:0;top:798px;width:25px;height:1px;background:#e6e6e6"></div><div class="t" style="left:11px;top:244px;font-size:12.5px;color:#444">1</div><div class="t" style="left:11px;top:264px;font-size:12.5px;color:#444">2</div><div class="t" style="left:11px;top:304px;font-size:12.5px;color:#444">3</div><div class="t" style="left:11px;top:324px;font-size:12.5px;color:#444">4</div><div class="t" style="left:11px;top:344px;font-size:12.5px;color:#444">5</div><div class="t" style="left:11px;top:364px;font-size:12.5px;color:#444">6</div><div class="t" style="left:11px;top:384px;font-size:12.5px;color:#444">7</div><div class="t" style="left:11px;top:404px;font-size:12.5px;color:#444">8</div><div class="t" style="left:11px;top:424px;font-size:12.5px;color:#444">9</div><div class="t" style="left:8px;top:444px;font-size:12.5px;color:#444">10</div><div class="t" style="left:8px;top:464px;font-size:12.5px;color:#444">11</div><div class="t" style="left:8px;top:484px;font-size:12.5px;color:#444">12</div><div class="t" style="left:8px;top:504px;font-size:12.5px;color:#444">13</div><div class="t" style="left:8px;top:524px;font-size:12.5px;color:#444">14</div><div class="t" style="left:8px;top:544px;font-size:12.5px;color:#444">15</div><div class="t" style="left:8px;top:564px;font-size:12.5px;color:#444">16</div><div class="t" style="left:8px;top:584px;font-size:12.5px;color:#444">17</div><div class="t" style="left:8px;top:604px;font-size:12.5px;color:#444">18</div><div class="t" style="left:8px;top:624px;font-size:12.5px;color:#444">19</div><div class="t" style="left:8px;top:644px;font-size:12.5px;color:#444">20</div><div class="t" style="left:8px;top:664px;font-size:12.5px;color:#444">21</div><div class="t" style="left:8px;top:684px;font-size:12.5px;color:#444">22</div><div class="t" style="left:8px;top:704px;font-size:12.5px;color:#444">23</div><div class="t" style="left:8px;top:724px;font-size:12.5px;color:#444">24</div><div class="t" style="left:8px;top:744px;font-size:12.5px;color:#444">25</div><div class="t" style="left:8px;top:764px;font-size:12.5px;color:#444">26</div><div class="t" style="left:8px;top:784px;font-size:12.5px;color:#444">27</div><div class="a" style="left:26px;top:278px;width:306px;height:40px;background:#c2e5f6"></div><div class="a" style="left:26px;top:319px;width:306px;height:39px;background:#fff"></div><div class="a" style="left:26px;top:318px;width:306px;height:1px;background:#47a8dc"></div><div class="a" style="left:26px;top:358px;width:306px;height:21px;background:#c2e5f6;border-top:1px solid #47a8dc"></div><div class="t" style="left:28px;top:283px;font-size:13.5px;font-weight:bold;color:#000;letter-spacing:-0.147px">Étiquettes de</div><div class="t" style="left:28px;top:303px;font-size:13.5px;font-weight:bold;color:#000;letter-spacing:-0.403px">lignes</div><div class="a" style="left:116px;top:300px;width:17px;height:17px;background:linear-gradient(#fff,#eef0f3);border:1px solid #a0a0a0"></div><svg style="left:121px;top:307px" width="8" height="5" viewBox="0 0 8 5"><path d="M0 0 H8 L4 5 Z" fill="#555"/></svg><div class="t" style="left:136px;top:303px;font-size:13.5px;font-weight:bold;color:#000;letter-spacing:-0.146px">Total de Quantité commandée</div><div class="t" style="left:28px;top:323px;font-size:13.5px;color:#000">A</div><div class="t" style="left:315px;top:323px;font-size:13.5px;color:#000">30</div><div class="t" style="left:28px;top:343px;font-size:13.5px;color:#000">B</div><div class="t" style="left:322px;top:343px;font-size:13.5px;color:#000">5</div><div class="t" style="left:28px;top:363px;font-size:13.5px;font-weight:bold;color:#000;letter-spacing:-0.169px">Total général</div><div class="t" style="left:314px;top:363px;font-size:13.5px;font-weight:bold;color:#000">35</div>

<!-- ===== SHEET TABS / STATUS ===== -->
<div class="a" style="left:0;top:798px;width:1600px;height:52px;background:#f0f0f0"></div><svg style="left:28px;top:808px" width="7" height="11" viewBox="0 0 7 11" fill="none" stroke="#a0a0a0"><path d="M6 0.5 L1 5.5 L6 10.5"/></svg><svg style="left:60px;top:808px" width="7" height="11" viewBox="0 0 7 11" fill="none" stroke="#a0a0a0"><path d="M1 0.5 L6 5.5 L1 10.5"/></svg><div class="a" style="left:0;top:798px;width:1250px;height:1px;background:#dcdcdc"></div><div class="a" style="left:115px;top:798px;width:44px;height:29px;background:#fafafa;border:1px solid #d8d8d8;border-top:none;border-radius:0 0 6px 6px"></div><div class="t" style="left:124px;top:806px;font-size:13.5px;color:#222">TCD</div><div class="a" style="left:124px;top:821px;width:26px;height:2px;background:#107c41"></div><div class="a" style="left:163px;top:805px;width:1px;height:16px;background:#d0d0d0"></div><div class="a" style="left:230px;top:805px;width:1px;height:16px;background:#d0d0d0"></div><div class="a" style="left:334px;top:805px;width:1px;height:16px;background:#d0d0d0"></div><div class="a" style="left:412px;top:805px;width:1px;height:16px;background:#d0d0d0"></div><div class="t" style="left:176px;top:808px;font-size:13.5px;color:#333;letter-spacing:-0.044px">Clients</div><div class="t" style="left:243px;top:808px;font-size:13.5px;color:#333;letter-spacing:0.059px">Commandes</div><div class="t" style="left:348px;top:808px;font-size:13.5px;color:#333;letter-spacing:0.210px">Produits</div><div class="t" style="left:11px;top:837px;font-size:12px;letter-spacing:-0.672px">Prêt</div><div class="t" style="left:50px;top:837px;font-size:12px;letter-spacing:-0.411px">Verr. num.</div><svg style="left:119px;top:835px" width="15" height="13" viewBox="0 0 15 13" fill="none" stroke="#333"><path d="M0.5 0.5 H13.5 V5 M0.5 0.5 V12.5 H6 M0.5 3 H13.5 M3 5.5 H7 M3 8 H6"/><circle cx="10.5" cy="9" r="3.3"/><circle cx="10.5" cy="9" r="1.2" fill="#333"/></svg><svg style="left:151px;top:834px" width="15" height="15" viewBox="0 0 15 15" fill="none" stroke="#333"><circle cx="6" cy="2" r="1.5"/><path d="M1 4.5 L6 5.5 L11 4.5 M6 5.5 V9 L3 14 M6 9 L8 12"/><path d="M9 10 L14 15 M14 10 L9 15"/></svg><div class="t" style="left:170px;top:836px;font-size:12.5px;font-weight:bold;letter-spacing:-0.978px">Accessibilité : consultez nos recommandations</div><div class="a" style="left:1297px;top:831px;width:40px;height:19px;background:#e1e1e1"></div><svg style="left:1310px;top:834px" width="14" height="14" viewBox="0 0 14 14" fill="none" stroke="#333"><path d="M0.5 0.5 H13.5 V13.5 H0.5 Z M0.5 5 H13.5 M0.5 9 H13.5 M5 0.5 V13.5 M9 0.5 V13.5"/></svg><svg style="left:1350px;top:834px" width="14" height="14" viewBox="0 0 14 14" fill="none" stroke="#333"><rect x="0.5" y="0.5" width="13" height="13"/><rect x="3.5" y="2.5" width="7" height="9"/><path d="M5 5 H9 M5 7 H9 M5 9 H9"/></svg><svg style="left:1390px;top:834px" width="14" height="14" viewBox="0 0 14 14" fill="none" stroke="#333"><path d="M0.5 0 V13.5 H13.5 V0 M0.5 7.5 H7 V0 M7 7.5 H13.5"/></svg><div class="a" style="left:1423px;top:840px;width:8px;height:1px;background:#333"></div><div class="a" style="left:1436px;top:841px;width:100px;height:1px;background:#555"></div><div class="a" style="left:1484px;top:836px;width:4px;height:11px;background:#555"></div><div class="a" style="left:1541px;top:840px;width:9px;height:1px;background:#333"></div><div class="a" style="left:1545px;top:836px;width:1px;height:9px;background:#333"></div><div class="t" style="left:1563px;top:836px;font-size:12px;letter-spacing:-1.258px">100 %</div>

<div class="a" style="left:752px;top:813px;width:2px;height:2px;background:#111"></div><div class="a" style="left:752px;top:818px;width:2px;height:2px;background:#111"></div><div class="a" style="left:788px;top:812px;width:422px;height:6px;background:#7a7a7a;border-radius:0 0 4px 4px"></div><svg style="left:774px;top:813px" width="8" height="6" viewBox="0 0 8 6"><path d="M0 0 H8 L5 6 Z" fill="#7a7a7a"/></svg><svg style="left:1218px;top:813px" width="8" height="6" viewBox="0 0 8 6"><path d="M0 0 H8 L3 6 Z" fill="#7a7a7a"/></svg>
<!-- ===== RIGHT PANE ===== -->
<div class="a" style="left:1250px;top:212px;width:350px;height:618px;background:#f0f0f0"></div><div class="a" style="left:1250px;top:221px;width:1px;height:607px;background:#cfcfcf"></div><div class="t" style="left:1264px;top:235px;font-size:15px;color:#333;letter-spacing:0.096px">Champs de tableau croisé dynamique</div><svg style="left:1537px;top:238px" width="14" height="8" viewBox="0 0 14 8" fill="none" stroke="#444"><path d="M0.5 0.5 L7 7 L13.5 0.5"/></svg><svg style="left:1571px;top:237px" width="10" height="10" viewBox="0 0 10 10" fill="none" stroke="#444"><path d="M0 0 L10 10 M10 0 L0 10"/></svg><div class="t" style="left:1263px;top:265px;font-size:13px;color:#333;letter-spacing:-0.074px">Actif</div><div class="t" style="left:1314px;top:265px;font-size:13px;color:#333;letter-spacing:-0.490px">Tous</div><div class="a" style="left:1313px;top:286px;width:28px;height:2px;background:#107c41"></div><div class="t" style="left:1264px;top:301px;font-size:12.5px;color:#333;letter-spacing:-0.430px">Choisissez les champs à inclure dans le rapport :</div><div class="a" style="left:1540px;top:292px;width:46px;height:29px;background:#fff;border:1px solid #9a9a9a"></div><svg style="left:1550px;top:298px" width="17" height="17" viewBox="0 0 17 17" fill="none" stroke="#444"><path d="M7 1 H10 L10.5 3 L12.5 4 L14.5 3 L16 5.5 L14.5 7 V10 L16 11.5 L14.5 14 L12.5 13 L10.5 14 L10 16 H7 L6.5 14 L4.5 13 L2.5 14 L1 11.5 L2.5 10 V7 L1 5.5 L2.5 3 L4.5 4 L6.5 3 Z"/><circle cx="8.5" cy="8.5" r="2.5"/></svg><svg style="left:1575px;top:305px" width="6" height="4" viewBox="0 0 6 4" fill="none" stroke="#444" stroke-width="1.3"><path d="M0.5 0.5 L3.0 3.5 L5.5 0.5"/></svg><div class="a" style="left:1263px;top:334px;width:323px;height:24px;background:#fff;border:1px solid #9a9a9a"></div><div class="t" style="left:1270px;top:339px;font-size:12.5px;color:#777;letter-spacing:-0.514px">Rechercher</div><svg style="left:1567px;top:338px" width="16" height="16" viewBox="0 0 16 16" fill="none" stroke="#444" stroke-width="1.2"><circle cx="10" cy="6" r="5"/><path d="M6.5 9.5 L1 15"/></svg><div class="a" style="left:1263px;top:374px;width:323px;height:148px;background:#fff;border:1px solid #9a9a9a;overflow:hidden"><div class="a" style="left:304px;top:0;width:17px;height:146px;background:#fff"></div><svg style="left:308px;top:5px" width="10" height="6" viewBox="0 0 10 6"><path d="M0 6 L5 0 L10 6 Z" fill="#777"/></svg><div class="a" style="left:308px;top:69px;width:10px;height:41px;background:#7a7a7a"></div><svg style="left:308px;top:134px" width="10" height="6" viewBox="0 0 10 6"><path d="M0 0 L5 6 L10 0 Z" fill="#777"/></svg><div class="a" style="left:38px;top:11px;width:13px;height:13px;background:#fff;border:1px solid #777"></div><div class="t" style="left:57px;top:12px;font-size:12.5px;color:#333;letter-spacing:-0.393px">Nom des clients V2</div><div class="a" style="left:38px;top:35px;width:13px;height:13px;background:#fff;border:1px solid #777"></div><div class="t" style="left:59px;top:32px;font-size:17px;font-style:italic;font-family:'Liberation Serif';color:#333;letter-spacing:-1px">f<span style="font-size:15px">x</span></div><div class="t" style="left:75px;top:36px;font-size:12.5px;color:#333;letter-spacing:-0.186px">Nombre de commande</div><div class="a" style="left:38px;top:59px;width:13px;height:13px;background:#107c41"></div><svg style="left:40px;top:62px" width="9" height="7" viewBox="0 0 9 7" fill="none" stroke="#fff" stroke-width="1.4"><path d="M0.5 3.5 L3.5 6 L8.5 0.5"/></svg><div class="t" style="left:59px;top:56px;font-size:17px;font-style:italic;font-family:'Liberation Serif';color:#333;letter-spacing:-1px">f<span style="font-size:15px">x</span></div><div class="t" style="left:75px;top:60px;font-size:12.5px;font-weight:bold;color:#222;letter-spacing:-0.330px">Total de Quantité commandée</div><svg style="left:7px;top:98px" width="7" height="6" viewBox="0 0 7 6" fill="none" stroke="#333"><path d="M6.5 0 V5.5 H0"/></svg><svg style="left:19px;top:91px" width="16" height="16" viewBox="0 0 16 16" fill="none" stroke="#444"><rect x="0.5" y="0.5" width="15" height="15"/><path d="M0.5 4 H15.5 M0.5 8 H15.5 M0.5 12 H15.5 M5.5 0.5 V15.5 M10.5 0.5 V15.5"/></svg><div class="t" style="left:38px;top:93px;font-size:12.5px;font-weight:bold;color:#222;letter-spacing:-0.606px">tableau_de_produit</div><div class="a" style="left:38px;top:111px;width:13px;height:13px;background:#fff;border:1px solid #777"></div><div class="t" style="left:57px;top:112px;font-size:12.5px;color:#333;letter-spacing:-0.092px">N° de produit</div><div class="a" style="left:38px;top:134px;width:13px;height:13px;background:#107c41"></div><svg style="left:40px;top:137px" width="9" height="7" viewBox="0 0 9 7" fill="none" stroke="#fff" stroke-width="1.4"><path d="M0.5 3.5 L3.5 6 L8.5 0.5"/></svg><div class="t" style="left:57px;top:135px;font-size:12.5px;font-weight:bold;color:#222;letter-spacing:-0.465px">Nom du produit</div></div><div class="a" style="left:1265px;top:537px;width:325px;height:0;border-top:1px dotted #c8c8c8"></div><div class="t" style="left:1267px;top:544px;font-size:12.5px;color:#333;letter-spacing:-0.482px">Faites glisser les champs dans les zones voulues ci-dessous:</div><svg style="left:1271px;top:578px" width="9" height="10" viewBox="0 0 9 10"><path d="M0 0 H9 L5.5 4 V10 L3.5 9 V4 Z" fill="#666"/></svg><div class="t" style="left:1289px;top:577px;font-size:12.5px;color:#333;letter-spacing:-0.505px">Filtres</div><div class="a" style="left:1266px;top:595px;width:153px;height:74px;background:#fff"></div><svg style="left:1433px;top:578px" width="10" height="11" viewBox="0 0 10 11" fill="none" stroke="#777"><path d="M0.5 0 V11 M3 0 V11 M5.5 0 V11 M8 0 V11"/></svg><div class="t" style="left:1451px;top:577px;font-size:12.5px;color:#333;letter-spacing:-0.261px">Colonnes</div><div class="a" style="left:1428px;top:595px;width:158px;height:74px;background:#fff"></div><div class="a" style="left:1425px;top:575px;width:2px;height:199px;background:#d4d4d4"></div><div class="a" style="left:1266px;top:675px;width:320px;height:2px;background:#d4d4d4"></div><svg style="left:1270px;top:686px" width="11" height="10" viewBox="0 0 11 10" fill="none" stroke="#777"><path d="M0 0.5 H11 M0 3.5 H11 M0 6.5 H11 M0 9.5 H11"/></svg><div class="t" style="left:1289px;top:685px;font-size:12.5px;color:#333;letter-spacing:-0.769px">Lignes</div><div class="t" style="left:1433px;top:683px;font-size:13px;color:#777">&Sigma;</div><div class="t" style="left:1451px;top:685px;font-size:12.5px;color:#333;letter-spacing:-0.578px">Valeurs</div><div class="a" style="left:1266px;top:703px;width:153px;height:73px;background:#fff"></div><div class="a" style="left:1428px;top:703px;width:158px;height:73px;background:#fff"></div><div class="a" style="left:1267px;top:704px;width:151px;height:19px;background:#fff;border:1px solid #a8a8a8"></div><div class="t" style="left:1274px;top:708px;font-size:12.5px;color:#222;letter-spacing:0.041px">Nom du produit</div><svg style="left:1404px;top:712px" width="6" height="4" viewBox="0 0 6 4" fill="none" stroke="#333" stroke-width="1.3"><path d="M0.5 0.5 L3.0 3.5 L5.5 0.5"/></svg><div class="a" style="left:1428px;top:704px;width:158px;height:19px;background:#fff;border:1px solid #a8a8a8"></div><div class="t" style="left:1436px;top:708px;font-size:12.5px;color:#222;letter-spacing:-0.218px">Total de Quantité com...</div><svg style="left:1572px;top:712px" width="6" height="4" viewBox="0 0 6 4" fill="none" stroke="#333" stroke-width="1.3"><path d="M0.5 0.5 L3.0 3.5 L5.5 0.5"/></svg><div class="a" style="left:1269px;top:801px;width:13px;height:13px;background:#fff;border:1px solid #777;border-radius:2px"></div><div class="t" style="left:1289px;top:802px;font-size:12.5px;color:#333;letter-spacing:-0.267px">Différer la mise à jour de la disposition</div><div class="a" style="left:1506px;top:795px;width:80px;height:25px;background:#f0f0f0;border:1px solid #d8d8d8"></div><div class="t" style="left:1512px;top:802px;font-size:12.5px;color:#b4b4b4;letter-spacing:-0.181px">Mettre à jour</div>

<!-- ===== POWER PIVOT WINDOW ===== -->
<div id="ppwin">
<div class="a" style="left:350px;top:141px;width:898px;height:674px;background:#fff;border-radius:8px 8px 6px 6px;box-shadow:0 12px 34px rgba(0,0,0,0.42),0 3px 8px rgba(0,0,0,0.22)"></div><div class="a" style="left:350px;top:141px;width:898px;height:674px;border:1px solid #0a78d6;border-radius:8px 8px 6px 6px;overflow:hidden"><div class="a" style="left:0;top:0;width:896px;height:31px;background:#0078d4"></div></div><svg style="left:359px;top:148px" width="17" height="17" viewBox="0 0 17 17"><path d="M5 0.5 L8 0 L16 3 V13 L8 16.5 L0.5 14 V4 Z" fill="#8cc63f"/><path d="M8 0 V16.5" stroke="#7ab52f" stroke-width="0.8"/><path d="M5.5 13 V5 M3.5 7 L5.5 4 L7.5 7 M5.5 12 L2.5 13.5" stroke="#fff" stroke-width="1.3" fill="none"/><path d="M9.5 3.5 L12 4.2 M9.5 7 L12 7.2 M9.5 10 L12 10 M9.5 13 L12 12.6 M13 4.5 L15 5.2 M13 7.5 L15 7.6 M13 10.2 L15 10 M13 12.5 L15 11.8" stroke="#fff" stroke-width="1.8"/></svg><div class="a" style="left:383px;top:152px;width:2px;height:11px;background:#5aa6e8"></div><svg style="left:393px;top:150px" width="15" height="14" viewBox="0 0 15 14"><rect x="7" y="2" width="7" height="11" fill="#217346"/><path d="M8.5 3.5 H10 M11 3.5 H12.5 M8.5 6.5 H10 M11 6.5 H12.5 M8.5 9.5 H10 M11 9.5 H12.5" stroke="#fff" stroke-width="1.3"/><path d="M0 1.5 L8 0 V14 L0 12.5 Z" fill="#1e7a45"/><path d="M2.3 4.5 L5.5 9.5 M5.5 4.5 L2.3 9.5" stroke="#fff" stroke-width="1.3"/></svg><svg style="left:415px;top:150px" width="14" height="14" viewBox="0 0 14 14"><defs><linearGradient id="fg" x1="0" y1="0" x2="1" y2="1"><stop offset="0" stop-color="#8a86e8"/><stop offset="1" stop-color="#3b36a8"/></linearGradient></defs><rect x="0" y="0" width="14" height="14" fill="url(#fg)"/><rect x="3" y="1" width="8" height="6" fill="#f4f4ff"/><rect x="4" y="9" width="6" height="5" fill="#e8e8f0"/><rect x="4.5" y="9.5" width="2.5" height="3" fill="#111"/></svg><svg style="left:437px;top:151px" width="14" height="12" viewBox="0 0 14 12" fill="none" stroke="#b5cbe3" stroke-width="1.8"><path d="M5 1 L1 5 L5 9 M1.5 5 H9 A4 4 0 0 1 9 12"/></svg><svg style="left:456px;top:156px" width="6" height="4" viewBox="0 0 6 4"><path d="M0 0 H6 L3.0 4 Z" fill="#fff"/></svg><svg style="left:469px;top:151px" width="14" height="12" viewBox="0 0 14 12" fill="none" stroke="#9bb6d6" stroke-width="1.8"><path d="M9 1 L13 5 L9 9 M12.5 5 H5 A4 4 0 0 0 5 12"/></svg><svg style="left:487px;top:156px" width="6" height="4" viewBox="0 0 6 4"><path d="M0 0 H6 L3.0 4 Z" fill="#fff"/></svg><div class="a" style="left:501px;top:154px;width:7px;height:1px;background:#111"></div><svg style="left:501px;top:157px" width="7" height="4" viewBox="0 0 7 4"><path d="M0 0 H7 L3.5 4 Z" fill="#111"/></svg><div class="a" style="left:516px;top:152px;width:2px;height:11px;background:#5aa6e8"></div><div class="t" style="left:524px;top:151px;font-size:13px;color:#fff;letter-spacing:-0.647px">Power Pivot pour Excel - clients_commandes_françois.xlsx</div><div class="a" style="left:1127px;top:156px;width:11px;height:1px;background:#fff"></div><div class="a" style="left:1172px;top:150px;width:12px;height:12px;border:1px solid #fff"></div><svg style="left:1219px;top:151px" width="11" height="11" viewBox="0 0 11 11" fill="none" stroke="#fff" stroke-width="1.1"><path d="M0 0 L11 11 M11 0 L0 11"/></svg><div class="a" style="left:351px;top:172px;width:896px;height:24px;background:#fff;border-bottom:1px solid #d8d8d8"></div><div class="a" style="left:351px;top:172px;width:56px;height:23px;background:#1d79d0"></div><div class="t" style="left:362px;top:179px;font-size:12px;color:#fff;letter-spacing:-0.336px">Fichier</div><div class="a" style="left:407px;top:172px;width:63px;height:24px;background:#f3f5f8;border-right:1px solid #d8d8d8"></div><div class="t" style="left:421px;top:179px;font-size:12px;color:#222;letter-spacing:-0.448px">Accueil</div><div class="t" style="left:486px;top:179px;font-size:12px;color:#222;letter-spacing:-0.080px">Conception</div><div class="t" style="left:575px;top:179px;font-size:12px;color:#222;letter-spacing:-0.762px">Avancé</div><svg style="left:1209px;top:180px" width="10" height="6" viewBox="0 0 10 6" fill="none" stroke="#999" stroke-width="1.1"><path d="M0.5 5.5 L5 1 L9.5 5.5"/></svg><div class="a" style="left:1228px;top:175px;width:16px;height:16px;border-radius:8px;background:#0b6fc9;border:1px solid #0a4f99"></div><div class="t" style="left:1232px;top:177px;font-size:12px;font-weight:bold;color:#fff">?</div><div class="a" style="left:351px;top:196px;width:896px;height:92px;background:#f3f5f8;border-bottom:1px solid #c8c8c8"></div><div class="a" style="left:355px;top:198px;width:51px;height:87px;background:#eef2f7;border:1px solid #c9def4"></div><div class="a" style="left:365px;top:203px;width:31px;height:30px;background:#f5f8fb;border:1px solid #a9cdf2"></div><svg style="left:372px;top:209px" width="17" height="17" viewBox="0 0 17 17"><rect x="0" y="3" width="10" height="12" fill="#e8b86a"/><path d="M3 3 V1 H7 V3" stroke="#555" stroke-width="1.2" fill="none"/><path d="M7.5 7.5 H12 L15.5 11 V16.5 H7.5 Z" fill="#fff" stroke="#555"/></svg><div class="t" style="left:362px;top:240px;font-size:11.5px;color:#222;letter-spacing:-0.604px">Presse-</div><div class="t" style="left:357px;top:253px;font-size:11.5px;color:#222;letter-spacing:0.047px">papiers</div><svg style="left:399px;top:257px" width="6" height="3" viewBox="0 0 6 3"><path d="M0 0 H6 L3.0 3 Z" fill="#999"/></svg><div class="a" style="left:408px;top:198px;width:104px;height:87px;background:#eef2f7;border:1px solid #c9def4"></div><div class="a" style="left:445px;top:203px;width:31px;height:30px;background:#f5f8fb;border:1px solid #a9cdf2"></div><svg style="left:453px;top:209px" width="16" height="16" viewBox="0 0 16 16"><path d="M8 0.5 H0.5 V13.5 H6" fill="none" stroke="#555"/><path d="M8 0.5 L10 2.5" stroke="#555" fill="none"/><rect x="7" y="5" width="7" height="10" rx="2" fill="#e8b86a"/><ellipse cx="10.5" cy="5.5" rx="3.5" ry="1.5" fill="#f3d29a"/></svg><div class="t" style="left:430px;top:240px;font-size:11.5px;color:#222;letter-spacing:0.055px">Obtenir des</div><div class="t" style="left:411px;top:253px;font-size:11.5px;color:#222;letter-spacing:-0.163px">données externes</div><svg style="left:503px;top:257px" width="6" height="3" viewBox="0 0 6 3"><path d="M0 0 H6 L3.0 3 Z" fill="#999"/></svg><svg style="left:531px;top:205px" width="30" height="30" viewBox="0 0 30 30"><path d="M1.5 0.5 H14 L19.5 6 V27.5 H1.5 Z" fill="#fff" stroke="#555"/><path d="M14 0.5 V6 H19.5" fill="none" stroke="#555"/><path d="M15 20 A6 6 0 0 1 26 16 M26.5 12.5 V17 H22 M27 22 A6 6 0 0 1 16 26 M15.5 29 V25 H20" fill="none" stroke="#3aa07a" stroke-width="2.2"/></svg><div class="t" style="left:518px;top:240px;font-size:11.5px;color:#222;letter-spacing:-0.056px">Actualiser</div><svg style="left:540px;top:257px" width="6" height="3" viewBox="0 0 6 3"><path d="M0 0 H6 L3.0 3 Z" fill="#999"/></svg><div class="a" style="left:577px;top:198px;width:1px;height:87px;background:#dcdcdc"></div><svg style="left:606px;top:205px" width="29" height="29" viewBox="0 0 29 29"><rect x="0.5" y="0.5" width="28" height="28" fill="#fff" stroke="#666"/><rect x="3" y="3" width="23" height="4" fill="#aaa"/><rect x="3" y="3" width="4" height="23" fill="#aaa"/><path d="M11 20 Q19 21 21 10" fill="none" stroke="#2f6db5" stroke-width="1.8"/><path d="M18 11 L21.5 7.5 L24 11.5 M13.5 17 L10 20.5 L14 23" fill="none" stroke="#2f6db5" stroke-width="1.6"/></svg><div class="t" style="left:584px;top:240px;font-size:11.5px;color:#222;letter-spacing:-0.166px">Tableau croisé</div><div class="t" style="left:588px;top:253px;font-size:11.5px;color:#222;letter-spacing:-0.158px">dynamique</div><svg style="left:647px;top:257px" width="6" height="3" viewBox="0 0 6 3"><path d="M0 0 H6 L3.0 3 Z" fill="#999"/></svg><div class="a" style="left:665px;top:198px;width:1px;height:87px;background:#dcdcdc"></div><div class="t" style="left:673px;top:206px;font-size:11.5px;color:#8a8a8a;letter-spacing:-0.165px">Type de données :</div><svg style="left:775px;top:209px" width="6" height="3" viewBox="0 0 6 3"><path d="M0 0 H6 L3.0 3 Z" fill="#ccc"/></svg><div class="t" style="left:673px;top:228px;font-size:11.5px;color:#222;letter-spacing:-0.128px">Format : Général</div><svg style="left:764px;top:231px" width="6" height="3" viewBox="0 0 6 3"><path d="M0 0 H6 L3.0 3 Z" fill="#999"/></svg><div class="t" style="left:677px;top:249px;font-size:13px;color:#555">$</div><svg style="left:692px;top:254px" width="5" height="3" viewBox="0 0 5 3"><path d="M0 0 H5 L2.5 3 Z" fill="#aaa"/></svg><div class="t" style="left:703px;top:248px;font-size:15px;color:#555">%</div><div class="t" style="left:729px;top:243px;font-size:17px;font-weight:bold;color:#555">,</div><div class="t" style="left:752px;top:247px;font-size:8.5px;font-weight:bold;color:#555;line-height:7px">&nbsp;.0<br>.00</div><svg style="left:746px;top:248px" width="8" height="6" viewBox="0 0 8 6" fill="none" stroke="#3d7fc6" stroke-width="1.4"><path d="M0 3 H7 M4.5 0.5 L7 3 L4.5 5.5"/></svg><div class="t" style="left:771px;top:247px;font-size:8.5px;font-weight:bold;color:#555;line-height:7px">.00<br>&nbsp;.0</div><svg style="left:767px;top:255px" width="8" height="6" viewBox="0 0 8 6" fill="none" stroke="#3d7fc6" stroke-width="1.4"><path d="M0 3 H7 M4.5 0.5 L7 3 L4.5 5.5"/></svg><div class="t" style="left:692px;top:273px;font-size:11.5px;color:#333;letter-spacing:0.012px">Mise en forme</div><div class="a" style="left:794px;top:198px;width:1px;height:87px;background:#dcdcdc"></div><div class="a" style="left:797px;top:198px;width:42px;height:87px;background:#eef2f7;border:1px solid #c9def4"></div><div class="a" style="left:803px;top:203px;width:31px;height:30px;background:#f5f8fb;border:1px solid #a9cdf2"></div><svg style="left:810px;top:208px" width="17" height="17" viewBox="0 0 17 17"><path d="M0 0 H14 L9 5 H5 Z" fill="#555"/><path d="M5 6 H9 V8" fill="none" stroke="#555" stroke-width="1.5"/><path d="M6 9 L14 16 M14 9 L6 16" stroke="#e0522b" stroke-width="1.8"/></svg><div class="t" style="left:800px;top:240px;font-size:11.5px;color:#222;letter-spacing:-0.286px">Trier et</div><div class="t" style="left:799px;top:253px;font-size:11.5px;color:#222;letter-spacing:0.406px">filtrer</div><svg style="left:831px;top:257px" width="6" height="3" viewBox="0 0 6 3"><path d="M0 0 H6 L3.0 3 Z" fill="#999"/></svg><div class="a" style="left:841px;top:198px;width:42px;height:87px;background:#eef2f7;border:1px solid #c9def4"></div><div class="a" style="left:847px;top:203px;width:31px;height:30px;background:#f5f8fb;border:1px solid #a9cdf2"></div><svg style="left:854px;top:208px" width="16" height="13" viewBox="0 0 16 13"><path d="M1 5 L3 0 H6 V13 H0 V7 Z M15 5 L13 0 H10 V13 H16 V7 Z M6 4 H10 V8 H6 Z" fill="#606060"/><path d="M2 9 V12 M14 9 V12" stroke="#fff" stroke-width="1"/></svg><div class="t" style="left:843px;top:240px;font-size:11.5px;color:#222;letter-spacing:-0.367px">Trouver</div><svg style="left:858px;top:257px" width="6" height="3" viewBox="0 0 6 3"><path d="M0 0 H6 L3.0 3 Z" fill="#999"/></svg><div class="a" style="left:885px;top:198px;width:42px;height:87px;background:#cde3f8;border:1px solid #74b4ee"></div><div class="a" style="left:891px;top:203px;width:31px;height:30px;background:#d8e9fa;border:1px solid #8cc2f2"></div><div class="t" style="left:897px;top:205px;font-size:20px;color:#444;font-family:'Liberation Serif'">&Sigma;</div><div class="t" style="left:887px;top:240px;font-size:11.5px;color:#222;letter-spacing:-0.453px">Calculs</div><svg style="left:902px;top:257px" width="6" height="3" viewBox="0 0 6 3"><path d="M0 0 H6 L3.0 3 Z" fill="#999"/></svg><div class="a" style="left:931px;top:200px;width:50px;height:66px;background:#e1e1e1;border:1px solid #cfcfcf"></div><svg style="left:941px;top:206px" width="30" height="25" viewBox="0 0 30 25"><rect x="0.5" y="0.5" width="28" height="20" fill="#fff" stroke="#888"/><rect x="1" y="1" width="27" height="4" fill="#b9cde6"/><rect x="1" y="1" width="6" height="19" fill="#b9cde6"/><path d="M0.5 5.5 H28.5 M0.5 10.5 H28.5 M0.5 15.5 H28.5 M7.5 0.5 V20.5 M14.5 0.5 V20.5 M21.5 0.5 V20.5" stroke="#888" stroke-width="1"/><path d="M1 21 H11 L10 24 H2 Z M12 21 H21 L19 24 H13 Z" fill="#fff" stroke="#888"/></svg><div class="t" style="left:937px;top:240px;font-size:11.5px;color:#222;letter-spacing:-0.006px">Vue de</div><div class="t" style="left:935px;top:253px;font-size:11.5px;color:#222;letter-spacing:-0.354px">données</div><svg style="left:984px;top:203px" width="17" height="17" viewBox="0 0 17 17" fill="none" stroke="#666"><rect x="9.5" y="0.5" width="7" height="5" fill="#fff"/><rect x="9.5" y="0.5" width="7" height="1.5" fill="#3d7fc6" stroke="none"/><rect x="0.5" y="5.5" width="7" height="5" fill="#fff"/><rect x="0.5" y="5.5" width="7" height="1.5" fill="#3d7fc6" stroke="none"/><rect x="9.5" y="11.5" width="7" height="5" fill="#fff"/><rect x="9.5" y="11.5" width="7" height="1.5" fill="#3d7fc6" stroke="none"/><path d="M7.5 8 H8.5 V3 H9.5 M8.5 8 V14 H9.5"/></svg><div class="t" style="left:1003px;top:206px;font-size:11.5px;color:#222;letter-spacing:-0.050px">Vue de diagramme</div><div class="a" style="left:981px;top:222px;width:180px;height:22px;background:#e3e3e3;border:1px solid #c8c8c8"></div><svg style="left:984px;top:225px" width="16" height="16" viewBox="0 0 16 16" fill="none" stroke="#666"><path d="M0.5 0.5 H15.5 V15.5 H0.5 Z" stroke-dasharray="1 1"/><path d="M5.5 5 V15.5 M10.5 5 V15.5 M5 5.5 H15.5 M5 10.5 H15.5" stroke="#777"/><path d="M0 16 L16 0" stroke="#555"/></svg><div class="t" style="left:1003px;top:228px;font-size:11.5px;color:#222;letter-spacing:-0.121px">Afficher les éléments masqués</div><div class="a" style="left:981px;top:244px;width:100px;height:22px;background:#e3e3e3;border:1px solid #c8c8c8"></div><svg style="left:985px;top:248px" width="16" height="15" viewBox="0 0 16 15" fill="none" stroke="#777"><rect x="0.5" y="0.5" width="12" height="12" fill="#fff"/><rect x="1" y="1" width="11" height="2" fill="#888" stroke="none"/><path d="M0.5 6.5 H6 M0.5 9.5 H6 M4.5 3 V12.5"/></svg><div class="t" style="left:990px;top:246px;font-size:15px;font-style:italic;font-family:'Liberation Serif';color:#555">f<span style="font-size:13px">x</span></div><div class="t" style="left:1003px;top:250px;font-size:11.5px;color:#222;letter-spacing:-0.061px">Zone de calcul</div><div class="t" style="left:1021px;top:273px;font-size:11.5px;color:#333;letter-spacing:0.031px">Affichage</div><div class="a" style="left:1167px;top:198px;width:1px;height:87px;background:#dcdcdc"></div>
</div>

<div id="ppbody">
<div class="a" style="left:351px;top:289px;width:896px;height:525px;background:#fff"></div><div class="a" style="left:352px;top:289px;width:892px;height:21px;background:#fff;border-top:1px solid #a8a8a8;border-bottom:1px solid #a8a8a8"></div><div class="a" style="left:548px;top:290px;width:1px;height:19px;background:#c8c8c8"></div><div class="t" style="left:358px;top:291px;font-size:14.5px;color:#000;letter-spacing:0.051px">[Quantité co...</div><svg style="left:461px;top:297px" width="8" height="4" viewBox="0 0 8 4"><path d="M0 0 H8 L4.0 4 Z" fill="#111"/></svg><div class="t" style="left:529px;top:289px;font-size:17px;font-style:italic;font-family:'Liberation Serif';color:#555;letter-spacing:-1px">f<span style="font-size:15px">x</span></div><div class="t" style="left:550px;top:292px;font-size:15px;color:#000">Total de Quantité commandée:=<span style="color:#1e9c1e">SUM</span><b>(</b>[Quantité commandée])</div><div class="a" style="left:1228px;top:290px;width:1px;height:19px;background:#a8a8a8"></div><svg style="left:1231px;top:293px" width="9" height="11" viewBox="0 0 9 11" fill="none" stroke="#111" stroke-width="1.4"><path d="M0.5 0.5 L4.5 4.5 L8.5 0.5 M0.5 5.5 L4.5 9.5 L8.5 5.5"/></svg><div class="a" style="left:352px;top:311px;width:892px;height:442px;background:#fff"></div><div class="a" style="left:352px;top:289px;width:1px;height:525px;background:#217346"></div><div class="a" style="left:1243px;top:289px;width:1px;height:525px;background:#217346"></div><div class="a" style="left:1244px;top:289px;width:3px;height:525px;background:#fff"></div><div class="a" style="left:369px;top:315px;width:875px;height:21px;background:#217346"></div><svg style="left:358px;top:320px" width="8" height="11" viewBox="0 0 8 11"><path d="M8 0 V11 H0 Z" fill="#d0d0d0"/></svg><div class="a" style="left:519px;top:315px;width:1px;height:21px;background:#fff;opacity:0.85"></div><div class="a" style="left:629px;top:315px;width:1px;height:21px;background:#fff;opacity:0.85"></div><div class="a" style="left:750px;top:315px;width:1px;height:21px;background:#fff;opacity:0.85"></div><div class="a" style="left:919px;top:315px;width:1px;height:21px;background:#fff;opacity:0.85"></div><div class="a" style="left:1084px;top:315px;width:1px;height:21px;background:#fff;opacity:0.85"></div><div class="a" style="left:1227px;top:315px;width:1px;height:21px;background:#fff;opacity:0.85"></div><div class="t" style="left:374px;top:318px;font-size:15px;color:#fff;letter-spacing:-0.005px">N° de commande</div><div class="a" style="left:502px;top:318px;width:15px;height:15px;background:linear-gradient(#f4f4fa,#d9d9e6);border:1px solid #9a9aae;border-radius:1px"></div><svg style="left:506px;top:324px" width="7" height="4" viewBox="0 0 7 4"><path d="M0 0 H7 L3.5 4 Z" fill="#2a2a6a"/></svg><div class="t" style="left:524px;top:318px;font-size:15px;color:#fff;letter-spacing:-0.207px">N° de c...</div><svg style="left:594px;top:318px" width="15" height="14" viewBox="0 0 15 14"><rect x="0" y="3" width="6" height="5" fill="#dfe6f3" stroke="#7d8fb3" stroke-width="0.8"/><rect x="3" y="7" width="6" height="6" fill="#eef2f8" stroke="#7d8fb3" stroke-width="0.8"/><circle cx="10" cy="4" r="3" fill="#c8d2e3"/><path d="M11 8 L14 10 L11 12" fill="#e8a040"/></svg><div class="a" style="left:612px;top:318px;width:15px;height:15px;background:linear-gradient(#f4f4fa,#d9d9e6);border:1px solid #9a9aae;border-radius:1px"></div><svg style="left:616px;top:324px" width="7" height="4" viewBox="0 0 7 4"><path d="M0 0 H7 L3.5 4 Z" fill="#2a2a6a"/></svg><div class="t" style="left:635px;top:318px;font-size:15px;color:#fff;letter-spacing:-0.188px">N° de pr...</div><svg style="left:714px;top:318px" width="15" height="14" viewBox="0 0 15 14"><rect x="0" y="3" width="6" height="5" fill="#dfe6f3" stroke="#7d8fb3" stroke-width="0.8"/><rect x="3" y="7" width="6" height="6" fill="#eef2f8" stroke="#7d8fb3" stroke-width="0.8"/><circle cx="10" cy="4" r="3" fill="#c8d2e3"/><path d="M11 8 L14 10 L11 12" fill="#e8a040"/></svg><div class="a" style="left:733px;top:318px;width:15px;height:15px;background:linear-gradient(#f4f4fa,#d9d9e6);border:1px solid #9a9aae;border-radius:1px"></div><svg style="left:737px;top:324px" width="7" height="4" viewBox="0 0 7 4"><path d="M0 0 H7 L3.5 4 Z" fill="#2a2a6a"/></svg><div class="t" style="left:756px;top:318px;font-size:15px;color:#fff;letter-spacing:0.387px">Quantité commandée</div><div class="t" style="left:924px;top:318px;font-size:15px;color:#fff;letter-spacing:-0.060px">Date de commande</div><div class="a" style="left:1068px;top:318px;width:15px;height:15px;background:linear-gradient(#f4f4fa,#d9d9e6);border:1px solid #9a9aae;border-radius:1px"></div><svg style="left:1072px;top:324px" width="7" height="4" viewBox="0 0 7 4"><path d="M0 0 H7 L3.5 4 Z" fill="#2a2a6a"/></svg><div class="t" style="left:1089px;top:318px;font-size:15px;color:#fff;letter-spacing:0.020px">Nom des clients</div><div class="a" style="left:1209px;top:318px;width:15px;height:15px;background:linear-gradient(#f4f4fa,#d9d9e6);border:1px solid #9a9aae;border-radius:1px"></div><svg style="left:1213px;top:324px" width="7" height="4" viewBox="0 0 7 4"><path d="M0 0 H7 L3.5 4 Z" fill="#2a2a6a"/></svg><div class="t" style="left:1231px;top:318px;font-size:15px;color:#fff">N</div><div class="a" style="left:369px;top:358px;width:875px;height:1px;background:#d4d4d4"></div><div class="t" style="left:357px;top:340px;font-size:14.5px;color:#666">1</div><div class="t" style="left:213px;width:300px;text-align:right;top:340px;font-size:14.5px;color:#000">1</div><div class="t" style="left:324px;width:300px;text-align:right;top:340px;font-size:14.5px;color:#000">3</div><div class="t" style="left:445px;width:300px;text-align:right;top:340px;font-size:14.5px;color:#000">100</div><div class="t" style="left:779px;width:300px;text-align:right;top:340px;font-size:14.5px;color:#000">16/02/2026 00:00:00</div><div class="t" style="left:614px;width:300px;text-align:right;top:340px;font-size:14.5px;color:#000">10</div><div class="t" style="left:1088px;top:340px;font-size:14.5px;color:#000">Ventura</div><div class="a" style="left:1228px;top:340px;width:15px;height:18px;overflow:hidden"><div class="t" style="left:2px;top:0;font-size:14.5px;color:#000">Ve</div></div><div class="a" style="left:369px;top:379px;width:875px;height:1px;background:#d4d4d4"></div><div class="t" style="left:357px;top:361px;font-size:14.5px;color:#666">2</div><div class="t" style="left:213px;width:300px;text-align:right;top:361px;font-size:14.5px;color:#000">2</div><div class="t" style="left:324px;width:300px;text-align:right;top:361px;font-size:14.5px;color:#000">2</div><div class="t" style="left:445px;width:300px;text-align:right;top:361px;font-size:14.5px;color:#000">100</div><div class="t" style="left:779px;width:300px;text-align:right;top:361px;font-size:14.5px;color:#000">17/02/2026 00:00:00</div><div class="t" style="left:614px;width:300px;text-align:right;top:361px;font-size:14.5px;color:#000">10</div><div class="t" style="left:1088px;top:361px;font-size:14.5px;color:#000">Darc</div><div class="a" style="left:1228px;top:361px;width:15px;height:18px;overflow:hidden"><div class="t" style="left:2px;top:0;font-size:14.5px;color:#000">Da</div></div><div class="a" style="left:369px;top:401px;width:875px;height:1px;background:#d4d4d4"></div><div class="t" style="left:357px;top:383px;font-size:14.5px;color:#666">3</div><div class="t" style="left:213px;width:300px;text-align:right;top:383px;font-size:14.5px;color:#000">3</div><div class="t" style="left:324px;width:300px;text-align:right;top:383px;font-size:14.5px;color:#000">4</div><div class="t" style="left:445px;width:300px;text-align:right;top:383px;font-size:14.5px;color:#000">200</div><div class="t" style="left:614px;width:300px;text-align:right;top:383px;font-size:14.5px;color:#000">5</div><div class="t" style="left:779px;width:300px;text-align:right;top:383px;font-size:14.5px;color:#000">18/02/2026 00:00:00</div><div class="t" style="left:1088px;top:383px;font-size:14.5px;color:#000">Blanche</div><div class="a" style="left:1228px;top:383px;width:15px;height:18px;overflow:hidden"><div class="t" style="left:2px;top:0;font-size:14.5px;color:#000">Bl</div></div><div class="a" style="left:369px;top:423px;width:875px;height:1px;background:#d4d4d4"></div><div class="t" style="left:357px;top:405px;font-size:14.5px;color:#666">4</div><div class="t" style="left:213px;width:300px;text-align:right;top:405px;font-size:14.5px;color:#000">4</div><div class="t" style="left:324px;width:300px;text-align:right;top:405px;font-size:14.5px;color:#000">2</div><div class="t" style="left:445px;width:300px;text-align:right;top:405px;font-size:14.5px;color:#000">100</div><div class="t" style="left:614px;width:300px;text-align:right;top:405px;font-size:14.5px;color:#000">10</div><div class="t" style="left:779px;width:300px;text-align:right;top:405px;font-size:14.5px;color:#000">19/02/2026 00:00:00</div><div class="t" style="left:1088px;top:405px;font-size:14.5px;color:#000">Darc</div><div class="a" style="left:1228px;top:405px;width:15px;height:18px;overflow:hidden"><div class="t" style="left:2px;top:0;font-size:14.5px;color:#000">Da</div></div><div class="a" style="left:369px;top:336px;width:1px;height:88px;background:#d4d4d4"></div><div class="a" style="left:519px;top:336px;width:1px;height:88px;background:#d4d4d4"></div><div class="a" style="left:629px;top:336px;width:1px;height:88px;background:#d4d4d4"></div><div class="a" style="left:750px;top:336px;width:1px;height:88px;background:#d4d4d4"></div><div class="a" style="left:919px;top:336px;width:1px;height:88px;background:#d4d4d4"></div><div class="a" style="left:1084px;top:336px;width:1px;height:88px;background:#d4d4d4"></div><div class="a" style="left:1227px;top:336px;width:1px;height:88px;background:#d4d4d4"></div><div class="a" style="left:369px;top:422px;width:875px;height:2px;background:#a8a8a8"></div><div class="a" style="left:354px;top:424px;width:15px;height:229px;background:#c5dbc7"></div><div class="a" style="left:369px;top:424px;width:1px;height:229px;background:#efefef"></div><div class="a" style="left:519px;top:424px;width:1px;height:229px;background:#efefef"></div><div class="a" style="left:629px;top:424px;width:1px;height:229px;background:#efefef"></div><div class="a" style="left:750px;top:424px;width:1px;height:229px;background:#efefef"></div><div class="a" style="left:919px;top:424px;width:1px;height:229px;background:#efefef"></div><div class="a" style="left:1084px;top:424px;width:1px;height:229px;background:#efefef"></div><div class="a" style="left:1227px;top:424px;width:1px;height:229px;background:#efefef"></div><div class="a" style="left:354px;top:445px;width:890px;height:1px;background:#eeeeee"></div><div class="a" style="left:354px;top:467px;width:890px;height:1px;background:#eeeeee"></div><div class="a" style="left:354px;top:489px;width:890px;height:1px;background:#eeeeee"></div><div class="a" style="left:354px;top:511px;width:890px;height:1px;background:#eeeeee"></div><div class="a" style="left:354px;top:533px;width:890px;height:1px;background:#eeeeee"></div><div class="a" style="left:354px;top:555px;width:890px;height:1px;background:#eeeeee"></div><div class="a" style="left:354px;top:577px;width:890px;height:1px;background:#eeeeee"></div><div class="a" style="left:354px;top:599px;width:890px;height:1px;background:#eeeeee"></div><div class="a" style="left:354px;top:621px;width:890px;height:1px;background:#eeeeee"></div><div class="a" style="left:354px;top:643px;width:890px;height:1px;background:#eeeeee"></div><div class="a" style="left:353px;top:652px;width:890px;height:4px;background:#a4a4a4"></div><div class="a" style="left:368px;top:677px;width:859px;height:1px;background:#d9d9d9"></div><div class="a" style="left:368px;top:698px;width:859px;height:1px;background:#d9d9d9"></div><div class="a" style="left:368px;top:719px;width:859px;height:1px;background:#d9d9d9"></div><div class="a" style="left:368px;top:740px;width:859px;height:1px;background:#d9d9d9"></div><div class="a" style="left:368px;top:657px;width:1px;height:91px;background:#d9d9d9"></div><div class="a" style="left:519px;top:657px;width:1px;height:91px;background:#d9d9d9"></div><div class="a" style="left:629px;top:657px;width:1px;height:91px;background:#d9d9d9"></div><div class="a" style="left:750px;top:657px;width:1px;height:91px;background:#d9d9d9"></div><div class="a" style="left:919px;top:657px;width:1px;height:91px;background:#d9d9d9"></div><div class="a" style="left:1084px;top:657px;width:1px;height:91px;background:#d9d9d9"></div><div class="t" style="left:372px;top:661px;font-size:15px;color:#000;letter-spacing:0.056px">Nombre de comma...</div><div class="a" style="left:750px;top:656px;width:170px;height:22px;border:3px solid #217346;background:#fff"></div><div class="t" style="left:755px;top:661px;font-size:15px;color:#000;letter-spacing:-0.062px">Total de Quantité com...</div><div class="a" style="left:1227px;top:656px;width:16px;height:92px;background:#efefef"></div><div class="a" style="left:1223px;top:744px;width:4px;height:4px;background:#efefef"></div><div class="a" style="left:1223px;top:744px;width:4px;height:4px;background:#fff;border-radius:0 0 4px 0"></div><div class="a" style="left:1234px;top:672px;width:2px;height:17px;background:#888"></div><div class="a" style="left:354px;top:748px;width:889px;height:18px;background:#efefef"></div><div class="a" style="left:370px;top:756px;width:597px;height:2px;background:#8a8a8a"></div><div class="a" style="left:354px;top:765px;width:889px;height:24px;background:#fff;border-top:1px solid #bfbfbf"></div><div class="a" style="left:717px;top:765px;width:526px;height:1px;background:#3f8f5f"></div><div class="a" style="left:355px;top:768px;width:1px;height:17px;background:#c8c8c8"></div><div class="t" style="left:362px;top:771px;font-size:12.5px;color:#111;letter-spacing:-0.438px">tableau_de_client</div><div class="a" style="left:462px;top:765px;width:138px;height:21px;background:#fff;border-left:1px solid #c8c8c8;border-bottom:2px solid #3f8f5f"></div><div class="t" style="left:468px;top:771px;font-size:12.5px;color:#2f7d3f;letter-spacing:-0.259px">tableau_de_commande</div><div class="a" style="left:600px;top:766px;width:1px;height:19px;background:#c8c8c8"></div><div class="t" style="left:607px;top:771px;font-size:12.5px;color:#111;letter-spacing:-0.356px">tableau_de_produit</div><div class="a" style="left:716px;top:768px;width:1px;height:17px;background:#c8c8c8"></div><div class="a" style="left:352px;top:789px;width:892px;height:1px;background:#217346"></div><div class="a" style="left:352px;top:790px;width:892px;height:1px;background:#fff"></div><div class="a" style="left:352px;top:791px;width:892px;height:22px;background:#217346"></div><div class="t" style="left:357px;top:795px;font-size:12px;color:#fff;letter-spacing:-0.803px">Enregistrement :</div><svg style="left:445px;top:796px" width="7" height="8" viewBox="0 0 7 8"><rect x="0" y="0" width="1.3" height="8" fill="#fff"/><path d="M7 0 V8 L2 4 Z" fill="#fff"/></svg><svg style="left:464px;top:797px" width="4" height="6" viewBox="0 0 4 6"><path d="M4 0 V6 L0 3 Z" fill="#fff"/></svg><div class="t" style="left:513px;top:795px;font-size:12px;color:#fff;letter-spacing:-0.948px">1 sur 4</div><svg style="left:587px;top:797px" width="4" height="6" viewBox="0 0 4 6"><path d="M0 0 V6 L4 3 Z" fill="#fff"/></svg><svg style="left:606px;top:796px" width="7" height="8" viewBox="0 0 7 8"><path d="M0 0 V8 L5 4 Z" fill="#fff"/><rect x="5.7" y="0" width="1.3" height="8" fill="#fff"/></svg><div class="a" style="left:1168px;top:791px;width:23px;height:22px;background:#0b4d26"></div><svg style="left:1172px;top:795px" width="14" height="14" viewBox="0 0 14 14" fill="none" stroke="#fff" stroke-width="1.2"><rect x="0.6" y="0.6" width="12.8" height="12.8"/><path d="M0.6 4.8 H13.4 M0.6 9.2 H13.4 M4.8 0.6 V13.4 M9.2 0.6 V13.4"/></svg><svg style="left:1203px;top:793px" width="17" height="16" viewBox="0 0 17 16" fill="none" stroke="#fff" stroke-width="1.2"><rect x="9.6" y="0.6" width="6.8" height="5"/><rect x="0.6" y="4.6" width="6.8" height="5"/><rect x="9.6" y="9.6" width="6.8" height="5"/><path d="M7.4 7 H8.5 V3 H9.6 M8.5 7 V12 H9.6"/></svg><svg style="left:1230px;top:799px" width="12" height="12" viewBox="0 0 12 12" fill="#ddd"><circle cx="10" cy="2" r="1"/><circle cx="6" cy="6" r="1"/><circle cx="10" cy="6" r="1"/><circle cx="2" cy="10" r="1"/><circle cx="6" cy="10" r="1"/><circle cx="10" cy="10" r="1"/></svg><div class="a" style="left:885px;top:288px;width:158px;height:88px;background:#f5f5f5;box-shadow:1px 2px 3px rgba(0,0,0,0.15)"></div><div class="t" style="left:897px;top:290px;font-size:18px;color:#444;font-family:'Liberation Serif'">&Sigma;</div><div class="t" style="left:915px;top:294px;font-size:11.5px;color:#222;letter-spacing:-0.070px">Somme automatique</div><svg style="left:1025px;top:298px" width="6" height="3" viewBox="0 0 6 3"><path d="M0 0 H6 L3.0 3 Z" fill="#aaa"/></svg><svg style="left:896px;top:314px" width="14" height="17" viewBox="0 0 14 17"><path d="M3 1 L3 4 M1.5 2.5 H4.5 M1.5 1 L4.5 4 M4.5 1 L1.5 4" stroke="#e8b040" stroke-width="0.8"/><rect x="3.5" y="3.5" width="9" height="13" fill="#fff" stroke="#666"/><rect x="5" y="5" width="6" height="3" fill="#e05030"/><rect x="5" y="9" width="6" height="3" fill="#e8b86a"/><rect x="5" y="13" width="6" height="2.5" fill="#5aa07a"/></svg><div class="t" style="left:915px;top:317px;font-size:11.5px;color:#222;letter-spacing:-0.499px">Créer un KPI</div><div class="t" style="left:947px;top:362px;font-size:11.5px;color:#333;letter-spacing:-0.620px">Calculs</div><svg style="left:0;top:0" width="1600" height="850" viewBox="0 0 1600 850" fill="none" stroke="#e0161b" stroke-width="2.6"><ellipse cx="906" cy="236" rx="29" ry="50"/><ellipse cx="949" cy="322.5" rx="68" ry="16.5"/><ellipse cx="833" cy="665" rx="102" ry="22"/><ellipse cx="1404.5" cy="440" rx="134" ry="19"/><ellipse cx="1502.5" cy="714.5" rx="82" ry="17"/></svg>
</div>



</body></html>
